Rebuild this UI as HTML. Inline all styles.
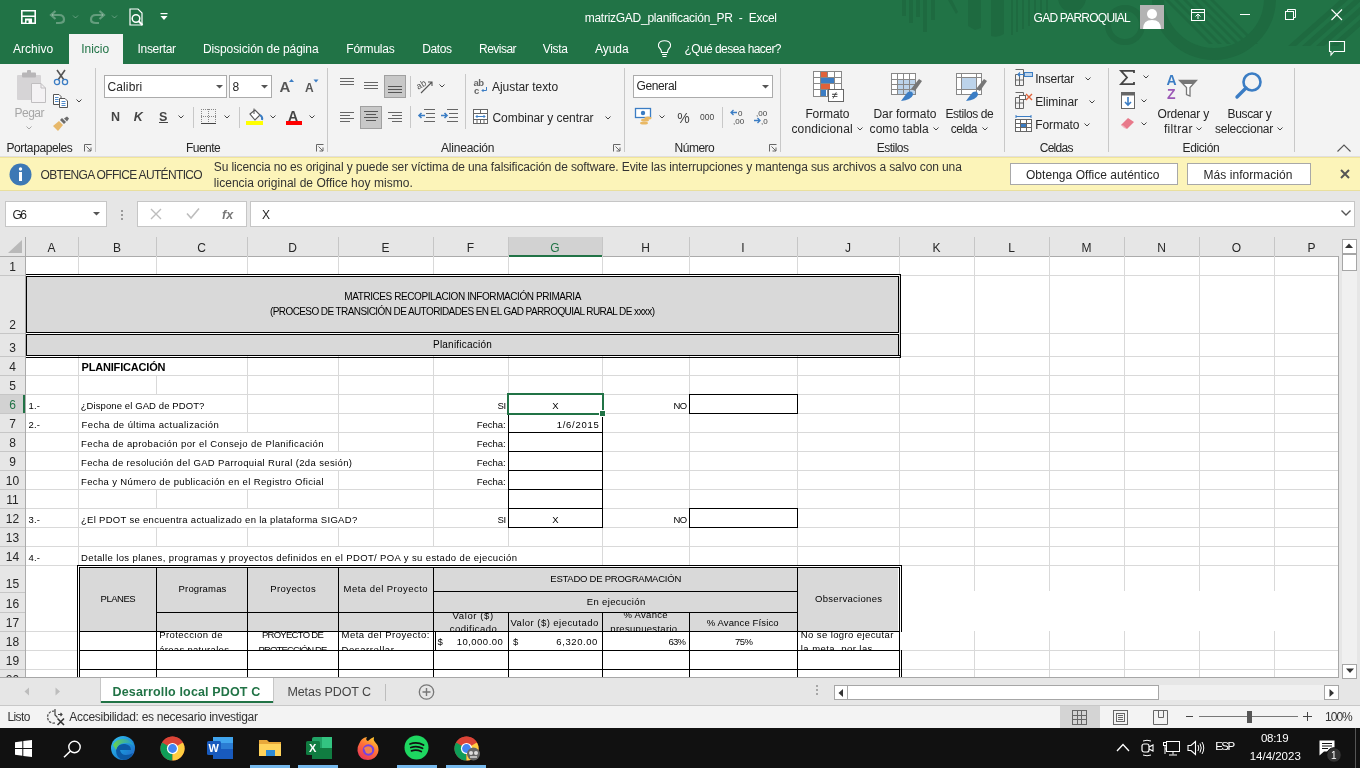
<!DOCTYPE html>
<html><head><meta charset="utf-8"><style>
html,body{margin:0;padding:0;width:1360px;height:768px;overflow:hidden;background:#fff;}
body{position:relative;font-family:"Liberation Sans",sans-serif;}
.a{position:absolute;box-sizing:border-box;}
.t{position:absolute;white-space:nowrap;line-height:1;}
svg.a{overflow:visible;}
</style></head><body>
<div id="root" style="position:absolute;left:0;top:0;width:1360px;height:768px;overflow:hidden;will-change:transform">
<div class="a" style="left:0px;top:0px;width:1360px;height:64px;background:#217346"></div>
<div class="a" style="left:0px;top:64px;width:1360px;height:93px;background:#f3f3f3"></div>
<div class="a" style="left:0px;top:156px;width:1360px;height:1px;background:#e1dfdd"></div>
<div class="a" style="left:0px;top:157px;width:1360px;height:34px;background:#fcf4b9;border-top:1px solid #f0e49a;border-bottom:1px solid #e9df9e"></div>
<div class="a" style="left:0px;top:191px;width:1360px;height:46px;background:#e6e6e6"></div>
<div class="a" style="left:0px;top:237px;width:1338px;height:441px;background:#fff"></div>
<div class="a" style="left:0px;top:678px;width:1360px;height:28px;background:#e6e6e6"></div>
<div class="a" style="left:0px;top:706px;width:1360px;height:22px;background:#f3f3f3"></div>
<div class="a" style="left:0px;top:728px;width:1360px;height:40px;background:#111111"></div>
<svg class="a" style="left:0px;top:0px;overflow:hidden" width="1360" height="64" viewBox="0 0 1360 64"><rect x="902" y="0" width="4" height="16" fill="#1e6a40"/><rect x="909" y="0" width="4" height="23" fill="#1e6a40"/><rect x="916" y="0" width="4" height="17" fill="#1e6a40"/><rect x="923" y="0" width="4" height="32" fill="#1e6a40"/><rect x="931" y="0" width="4" height="20" fill="#1e6a40"/><path d="M948 0 L952 0 L958 12 L956 14 Z" fill="#1e6a40"/><path d="M968 0 H981 V28 L975 30 L968 26 Z" fill="#1e6a40"/><path d="M991 0 H1004 V34 Q998 38 991 36 Z" fill="#1e6a40"/><rect x="1011" y="0" width="2" height="35" fill="#1e6a40"/><rect x="1016" y="0" width="2" height="32" fill="#1e6a40"/><rect x="1022" y="0" width="2" height="29" fill="#1e6a40"/><rect x="1028" y="0" width="2" height="26" fill="#1e6a40"/><rect x="1034" y="0" width="2" height="23" fill="#1e6a40"/><rect x="1040" y="0" width="2" height="20" fill="#1e6a40"/><rect x="1046" y="0" width="2" height="17" fill="#1e6a40"/><circle cx="1072" cy="-2" r="14" fill="#1e6a40"/><circle cx="1125" cy="25" r="17" fill="none" stroke="#1e6a40" stroke-width="6"/><circle cx="1214" cy="-2" r="56" fill="none" stroke="#1e6a40" stroke-width="12"/><path d="M1165 0 L1169 0 L1213 44 L1209 44 Z" fill="#1e6a40"/><path d="M1174 0 L1178 0 L1222 44 L1218 44 Z" fill="#1e6a40"/><path d="M1183 0 L1187 0 L1231 44 L1227 44 Z" fill="#1e6a40"/><path d="M1192 0 L1196 0 L1240 44 L1236 44 Z" fill="#1e6a40"/><path d="M1201 0 L1205 0 L1249 44 L1245 44 Z" fill="#1e6a40"/><path d="M1210 0 L1214 0 L1258 44 L1254 44 Z" fill="#1e6a40"/><path d="M1340 0 L1348 0 L1296 46 L1288 46 Z" fill="#1e6a40"/><path d="M1354 0 L1362 0 L1310 46 L1302 46 Z" fill="#1e6a40"/><path d="M1368 0 L1376 0 L1324 46 L1316 46 Z" fill="#1e6a40"/><path d="M1382 0 L1390 0 L1338 46 L1330 46 Z" fill="#1e6a40"/></svg>
<svg class="a" style="left:21px;top:10px;" width="16" height="14" viewBox="0 0 16 14"><path d="M0.8 0.8 H14.2 V13.2 H0.8 Z" fill="none" stroke="#fff" stroke-width="1.6"/><rect x="1" y="5.5" width="13" height="1.5" fill="#fff"/><rect x="4" y="8.5" width="7" height="4.5" fill="#fff"/><rect x="5.5" y="10.5" width="2" height="2.5" fill="#217346"/></svg>
<svg class="a" style="left:49px;top:9px;" width="32" height="16" viewBox="0 0 32 16"><path d="M3 6 H10 Q15 6 15 10.5 Q15 14 10 14 H7" fill="none" stroke="rgba(255,255,255,0.3)" stroke-width="2.2"/><path d="M6.5 2 L2 6 L6.5 10" fill="none" stroke="rgba(255,255,255,0.3)" stroke-width="2.2"/><path d="M24 6.5 L26.5 9 L29 6.5" fill="none" stroke="rgba(255,255,255,0.3)" stroke-width="1"/></svg>
<svg class="a" style="left:88px;top:9px;" width="32" height="16" viewBox="0 0 32 16"><path d="M15 6 H8 Q3 6 3 10.5 Q3 14 8 14 H11" fill="none" stroke="rgba(255,255,255,0.3)" stroke-width="2.2"/><path d="M11.5 2 L16 6 L11.5 10" fill="none" stroke="rgba(255,255,255,0.3)" stroke-width="2.2"/><path d="M24 6.5 L26.5 9 L29 6.5" fill="none" stroke="rgba(255,255,255,0.3)" stroke-width="1"/></svg>
<svg class="a" style="left:128px;top:8px;" width="18" height="18" viewBox="0 0 18 18"><path d="M2 1 H10 L14 5 V17 H2 Z" fill="none" stroke="#fff" stroke-width="1.2"/><circle cx="8" cy="10.5" r="3.8" fill="none" stroke="#fff" stroke-width="1.5"/><path d="M10.5 13 L14.5 17" stroke="#fff" stroke-width="2"/></svg>
<svg class="a" style="left:160px;top:13px;" width="9" height="8" viewBox="0 0 9 8"><rect x="0.5" y="0" width="7" height="1.2" fill="#fff"/><path d="M0.5 3 H7.5 L4 7 Z" fill="#fff"/></svg>
<div class="t" style="left:584.70px;top:12.02px;font-size:12px;color:#ffffff;letter-spacing:-0.261px;">matrizGAD_planificación_PR&nbsp;&nbsp;-&nbsp;&nbsp;Excel</div>
<div class="t" style="left:1033.60px;top:12.02px;font-size:12px;color:#ffffff;letter-spacing:-0.767px;">GAD PARROQUIAL</div>
<div class="a" style="left:1140px;top:5px;width:24px;height:24px;background:#b3b3b3"></div>
<svg class="a" style="left:1140px;top:5px;" width="24" height="24" viewBox="0 0 24 24"><circle cx="12" cy="9" r="5" fill="#fff"/><path d="M3 24 Q3 15 12 15 Q21 15 21 24 Z" fill="#fff"/></svg>
<svg class="a" style="left:1191px;top:9px;" width="16" height="13" viewBox="0 0 16 13"><rect x="0.5" y="0.5" width="13" height="11" fill="none" stroke="#fff"/><path d="M0.5 3.5 H13.5" stroke="#fff"/><path d="M7 10 V5 M4.5 7.5 L7 5 L9.5 7.5" fill="none" stroke="#fff"/></svg>
<div class="a" style="left:1240px;top:14px;width:10px;height:1px;background:#fff"></div>
<svg class="a" style="left:1285px;top:9px;" width="12" height="12" viewBox="0 0 12 12"><rect x="0.5" y="2.5" width="8" height="8" fill="none" stroke="#fff"/><path d="M2.5 2.5 V0.5 H10.5 V8.5 H8.5" fill="none" stroke="#fff"/></svg>
<svg class="a" style="left:1331px;top:9px;" width="12" height="12" viewBox="0 0 12 12"><path d="M0.5 0.5 L11 11 M11 0.5 L0.5 11" stroke="#fff" stroke-width="1.1"/></svg>
<svg class="a" style="left:1328px;top:40px;" width="18" height="17" viewBox="0 0 18 17"><path d="M1.5 1.5 H16.5 V11.5 H6 L3 15 V11.5 H1.5 Z" fill="none" stroke="#fff" stroke-width="1.1"/></svg>
<div class="a" style="left:69px;top:34px;width:54px;height:30px;background:#f3f3f3"></div>
<div class="t" style="left:12.90px;top:43.02px;font-size:12px;color:#ffffff;letter-spacing:0.041px;">Archivo</div>
<div class="t" style="left:137.50px;top:43.02px;font-size:12px;color:#ffffff;letter-spacing:-0.310px;">Insertar</div>
<div class="t" style="left:202.90px;top:43.02px;font-size:12px;color:#ffffff;letter-spacing:-0.086px;">Disposición de página</div>
<div class="t" style="left:346.30px;top:43.02px;font-size:12px;color:#ffffff;letter-spacing:-0.226px;">Fórmulas</div>
<div class="t" style="left:422.30px;top:43.02px;font-size:12px;color:#ffffff;letter-spacing:-0.430px;">Datos</div>
<div class="t" style="left:479.00px;top:43.02px;font-size:12px;color:#ffffff;letter-spacing:-0.525px;">Revisar</div>
<div class="t" style="left:542.70px;top:43.02px;font-size:12px;color:#ffffff;letter-spacing:-0.292px;">Vista</div>
<div class="t" style="left:595.00px;top:43.02px;font-size:12px;color:#ffffff;letter-spacing:-0.062px;">Ayuda</div>
<div class="t" style="left:684.40px;top:43.02px;font-size:12px;color:#ffffff;letter-spacing:-0.557px;">¿Qué desea hacer?</div>
<div class="t" style="left:81.30px;top:43.02px;font-size:12px;color:#217346;letter-spacing:-0.036px;">Inicio</div>
<svg class="a" style="left:657px;top:40px;" width="15" height="18" viewBox="0 0 15 18"><path d="M4.5 12.5 Q4.5 10 3 8.5 Q1 6.5 1.5 4.5 Q2.5 0.8 7.5 0.8 Q12.5 0.8 13.5 4.5 Q14 6.5 12 8.5 Q10.5 10 10.5 12.5 Z" fill="none" stroke="#fff" stroke-width="1.1"/><path d="M5 14.5 H10 M5.5 16.5 H9.5" stroke="#fff" stroke-width="1.1"/></svg>
<div class="a" style="left:95px;top:68px;width:1px;height:84px;background:#c8c8c8"></div>
<div class="a" style="left:327px;top:68px;width:1px;height:84px;background:#c8c8c8"></div>
<div class="a" style="left:624px;top:68px;width:1px;height:84px;background:#c8c8c8"></div>
<div class="a" style="left:780px;top:68px;width:1px;height:84px;background:#c8c8c8"></div>
<div class="a" style="left:1004px;top:68px;width:1px;height:84px;background:#c8c8c8"></div>
<div class="a" style="left:1108px;top:68px;width:1px;height:84px;background:#c8c8c8"></div>
<div class="a" style="left:1294px;top:68px;width:1px;height:84px;background:#c8c8c8"></div>
<div class="t" style="left:6.50px;top:142.02px;font-size:12px;color:#262626;letter-spacing:-0.410px;">Portapapeles</div>
<div class="t" style="left:185.90px;top:142.02px;font-size:12px;color:#262626;letter-spacing:-0.493px;">Fuente</div>
<div class="t" style="left:441.00px;top:142.02px;font-size:12px;color:#262626;letter-spacing:-0.207px;">Alineación</div>
<div class="t" style="left:674.50px;top:142.02px;font-size:12px;color:#262626;letter-spacing:-0.480px;">Número</div>
<div class="t" style="left:876.70px;top:142.02px;font-size:12px;color:#262626;letter-spacing:-0.506px;">Estilos</div>
<div class="t" style="left:1039.70px;top:142.02px;font-size:12px;color:#262626;letter-spacing:-0.709px;">Celdas</div>
<div class="t" style="left:1182.60px;top:142.02px;font-size:12px;color:#262626;letter-spacing:-0.394px;">Edición</div>
<svg class="a" style="left:84px;top:144px;" width="8" height="8" viewBox="0 0 8 8"><path d="M0.5 7.5 V0.5 H7.5" fill="none" stroke="#666" stroke-width="1"/><path d="M2.5 2.5 L7 7 M3.5 7 H7 V3.5" fill="none" stroke="#666" stroke-width="1"/></svg>
<svg class="a" style="left:316px;top:144px;" width="8" height="8" viewBox="0 0 8 8"><path d="M0.5 7.5 V0.5 H7.5" fill="none" stroke="#666" stroke-width="1"/><path d="M2.5 2.5 L7 7 M3.5 7 H7 V3.5" fill="none" stroke="#666" stroke-width="1"/></svg>
<svg class="a" style="left:613px;top:144px;" width="8" height="8" viewBox="0 0 8 8"><path d="M0.5 7.5 V0.5 H7.5" fill="none" stroke="#666" stroke-width="1"/><path d="M2.5 2.5 L7 7 M3.5 7 H7 V3.5" fill="none" stroke="#666" stroke-width="1"/></svg>
<svg class="a" style="left:769px;top:144px;" width="8" height="8" viewBox="0 0 8 8"><path d="M0.5 7.5 V0.5 H7.5" fill="none" stroke="#666" stroke-width="1"/><path d="M2.5 2.5 L7 7 M3.5 7 H7 V3.5" fill="none" stroke="#666" stroke-width="1"/></svg>
<svg class="a" style="left:1337px;top:144px;" width="15" height="8" viewBox="0 0 15 8"><path d="M0.5 7.5 L7 1 L13.5 7.5" fill="none" stroke="#555" stroke-width="1.1"/></svg>
<svg class="a" style="left:16px;top:70px;" width="32" height="34" viewBox="0 0 32 34"><rect x="1" y="5" width="24" height="25" rx="1" fill="#d6d4d6"/><rect x="6" y="2.5" width="14" height="5" rx="1" fill="#b8b6b8"/><rect x="11" y="0" width="4" height="4" rx="1" fill="#b8b6b8"/><path d="M15.5 13.5 H25 L29.5 18 V32.5 H15.5 Z" fill="#f4f2f4" stroke="#c0bec0" stroke-width="1"/><path d="M25 13.5 V18 H29.5" fill="none" stroke="#c0bec0"/></svg>
<div class="t" style="left:14.60px;top:107.02px;font-size:12px;color:#a6a6a6;letter-spacing:-0.524px;">Pegar</div>
<svg class="a" style="left:26px;top:126px;" width="6" height="4" viewBox="0 0 6 4"><path d="M0.5 0.5 L3 3 L5.5 0.5" fill="none" stroke="#a6a6a6" stroke-width="1"/></svg>
<svg class="a" style="left:53px;top:69px;" width="16" height="17" viewBox="0 0 16 17"><path d="M4 1 L11 11 M12 1 L5 11" stroke="#555" stroke-width="1.6"/><circle cx="4" cy="13" r="2.6" fill="none" stroke="#3b7dc4" stroke-width="1.3"/><circle cx="12" cy="13" r="2.6" fill="none" stroke="#3b7dc4" stroke-width="1.3"/></svg>
<svg class="a" style="left:52px;top:93px;" width="17" height="16" viewBox="0 0 17 16"><path d="M1.5 1.5 H7 L9 3.5 V11.5 H1.5 Z" fill="#fff" stroke="#555"/><path d="M7.5 5.5 H13 L15.5 8 V14.5 H7.5 Z" fill="#fff" stroke="#555"/><path d="M3 4.5 H6.5 M3 6.5 H6.5 M3 8.5 H6.5 M9.5 8.5 H13.5 M9.5 10.5 H13.5 M9.5 12.5 H13.5" stroke="#3b7dc4" stroke-width="0.9"/></svg>
<svg class="a" style="left:76px;top:99px;" width="6" height="4" viewBox="0 0 6 4"><path d="M0.5 0.5 L3 3 L5.5 0.5" fill="none" stroke="#444" stroke-width="1"/></svg>
<svg class="a" style="left:52px;top:116px;" width="18" height="16" viewBox="0 0 18 16"><path d="M1 10 L7 5 L11 9 L6 15 Z" fill="#e7b86a"/><path d="M8 4 L12 8 L14 6 L10 2 Z" fill="#6b6b6b"/><path d="M12 2.5 L15 0.5 L17 2.5 L15 5.5 Z" fill="#6b6b6b"/></svg>
<div class="a" style="left:104px;top:75px;width:123px;height:23px;background:#fff;border:1px solid #ababab"></div>
<div class="t" style="left:107.40px;top:81.02px;font-size:12px;color:#262626;letter-spacing:0.142px;">Calibri</div>
<svg class="a" style="left:215.9px;top:84.5px;" width="7" height="4" viewBox="0 0 7 4"><path d="M0 0 H7 L3.5 3.5 Z" fill="#555"/></svg>
<div class="a" style="left:229px;top:75px;width:43px;height:23px;background:#fff;border:1px solid #ababab"></div>
<div class="t" style="left:232.60px;top:81.02px;font-size:12px;color:#262626;">8</div>
<svg class="a" style="left:260.9px;top:84.5px;" width="7" height="4" viewBox="0 0 7 4"><path d="M0 0 H7 L3.5 3.5 Z" fill="#555"/></svg>
<svg class="a" style="left:279px;top:78px;" width="16" height="16" viewBox="0 0 16 16"><text x="0.5" y="14" font-family="Liberation Sans" font-size="15" font-weight="bold" fill="#555">A</text><path d="M10 4 L12.5 1 L15 4 Z" fill="#3b7dc4"/></svg>
<svg class="a" style="left:304px;top:79px;" width="16" height="15" viewBox="0 0 16 15"><text x="1" y="13" font-family="Liberation Sans" font-size="12" font-weight="bold" fill="#555">A</text><path d="M9.5 0.5 H14.5 L12 3.5 Z" fill="#3b7dc4"/></svg>
<div class="t" style="left:110.90px;top:110.77px;font-size:12.5px;color:#444;font-weight:bold;">N</div>
<div class="t" style="left:133.80px;top:110.77px;font-size:12.5px;color:#444;font-weight:bold;font-style:italic;">K</div>
<div class="t" style="left:158.90px;top:110.77px;font-size:12.5px;color:#444;font-weight:bold;">S</div>
<div class="a" style="left:158.5px;top:122px;width:9px;height:1px;background:#444"></div>
<svg class="a" style="left:178px;top:115px;" width="6" height="4" viewBox="0 0 6 4"><path d="M0.5 0.5 L3 3 L5.5 0.5" fill="none" stroke="#444" stroke-width="1"/></svg>
<div class="a" style="left:193px;top:107px;width:1px;height:21px;background:#c8c8c8"></div>
<svg class="a" style="left:201px;top:109px;" width="15" height="15" viewBox="0 0 15 15"><path d="M0.5 0 V14 M14.5 0 V14 M7.5 0 V14 M0 0.5 H15 M0 7.5 H15" fill="none" stroke="#888" stroke-width="1" stroke-dasharray="1 1"/><path d="M0 14.5 H15" stroke="#444" stroke-width="1"/></svg>
<svg class="a" style="left:224px;top:115px;" width="6" height="4" viewBox="0 0 6 4"><path d="M0.5 0.5 L3 3 L5.5 0.5" fill="none" stroke="#444" stroke-width="1"/></svg>
<div class="a" style="left:239px;top:107px;width:1px;height:21px;background:#c8c8c8"></div>
<svg class="a" style="left:246px;top:108px;" width="18" height="18" viewBox="0 0 18 18"><path d="M4 6 L9 2 L14 7 L9 12 Z" fill="#fff" stroke="#555" stroke-width="1.1"/><path d="M8 0.5 V6" stroke="#555"/><path d="M14 7 Q17 9 16 12" fill="none" stroke="#3b7dc4" stroke-width="2"/><rect x="0" y="13" width="17" height="4" fill="#ffff00"/></svg>
<svg class="a" style="left:270px;top:115px;" width="6" height="4" viewBox="0 0 6 4"><path d="M0.5 0.5 L3 3 L5.5 0.5" fill="none" stroke="#444" stroke-width="1"/></svg>
<svg class="a" style="left:286px;top:109px;" width="17" height="17" viewBox="0 0 17 17"><text x="2" y="11.5" font-family="Liberation Sans" font-size="14" font-weight="bold" fill="#444">A</text><rect x="0" y="12" width="16" height="4" fill="#ff0000"/></svg>
<svg class="a" style="left:309px;top:115px;" width="6" height="4" viewBox="0 0 6 4"><path d="M0.5 0.5 L3 3 L5.5 0.5" fill="none" stroke="#444" stroke-width="1"/></svg>
<svg class="a" style="left:340px;top:78px;" width="14" height="9" viewBox="0 0 14 9"><path d="M0 0.5 H14" stroke="#666" stroke-width="1"/><path d="M0 3.5 H14" stroke="#666" stroke-width="1"/><path d="M0 6.5 H14" stroke="#666" stroke-width="1"/></svg>
<svg class="a" style="left:364px;top:82px;" width="14" height="9" viewBox="0 0 14 9"><path d="M0 0.5 H14" stroke="#666" stroke-width="1"/><path d="M0 3.5 H14" stroke="#666" stroke-width="1"/><path d="M0 6.5 H14" stroke="#666" stroke-width="1"/></svg>
<div class="a" style="left:384px;top:75px;width:22px;height:23px;background:#c8c8c8;border:1px solid #a0a0a0"></div>
<svg class="a" style="left:388px;top:86px;" width="14" height="9" viewBox="0 0 14 9"><path d="M0 0.5 H14" stroke="#555" stroke-width="1"/><path d="M0 3.5 H14" stroke="#555" stroke-width="1"/><path d="M0 6.5 H14" stroke="#555" stroke-width="1"/></svg>
<div class="a" style="left:410px;top:76px;width:1px;height:21px;background:#c8c8c8"></div>
<svg class="a" style="left:417px;top:78px;" width="18" height="16" viewBox="0 0 18 16"><text x="0" y="9" font-family="Liberation Sans" font-size="9" fill="#555" transform="rotate(-30 6 8)">ab</text><path d="M4 15 L15 4 M11 4 H15 V8" fill="none" stroke="#555" stroke-width="1.1"/></svg>
<svg class="a" style="left:439px;top:84px;" width="6" height="4" viewBox="0 0 6 4"><path d="M0.5 0.5 L3 3 L5.5 0.5" fill="none" stroke="#444" stroke-width="1"/></svg>
<div class="a" style="left:465px;top:74px;width:1px;height:55px;background:#c8c8c8"></div>
<svg class="a" style="left:474px;top:78px;" width="14" height="16" viewBox="0 0 14 16"><text x="-0.5" y="7.5" font-family="Liberation Sans" font-size="9.5" font-weight="bold" fill="#666" letter-spacing="-0.5">ab</text><text x="0" y="15.5" font-family="Liberation Sans" font-size="9.5" font-weight="bold" fill="#666">c</text><path d="M12.5 9 V12.5 H8 M9.5 11 L8 12.5 L9.5 14" fill="none" stroke="#3b7dc4" stroke-width="1"/></svg>
<div class="t" style="left:492.00px;top:81.02px;font-size:12px;color:#262626;letter-spacing:-0.054px;">Ajustar texto</div>
<svg class="a" style="left:340px;top:112px;" width="14" height="12" viewBox="0 0 14 12"><path d="M0 0.5 H14" stroke="#666" stroke-width="1"/><path d="M0 3.5 H10" stroke="#666" stroke-width="1"/><path d="M0 6.5 H14" stroke="#666" stroke-width="1"/><path d="M0 9.5 H10" stroke="#666" stroke-width="1"/></svg>
<div class="a" style="left:360px;top:106px;width:22px;height:23px;background:#c8c8c8;border:1px solid #a0a0a0"></div>
<svg class="a" style="left:364px;top:111px;" width="14" height="12" viewBox="0 0 14 12"><path d="M0 0.5 H14 M2 3.5 H12 M0 6.5 H14 M2 9.5 H12" stroke="#555"/></svg>
<svg class="a" style="left:388px;top:112px;" width="14" height="12" viewBox="0 0 14 12"><path d="M0 0.5 H14 M4 3.5 H14 M0 6.5 H14 M4 9.5 H14" stroke="#666"/></svg>
<div class="a" style="left:410px;top:106px;width:1px;height:22px;background:#c8c8c8"></div>
<svg class="a" style="left:418px;top:109px;" width="17" height="15" viewBox="0 0 17 15"><path d="M6 0.5 H17 M8 4.5 H17 M8 8.5 H17 M6 12.5 H17" stroke="#666"/><path d="M7 6.5 H1 M3.5 4 L1 6.5 L3.5 9" fill="none" stroke="#3b7dc4" stroke-width="1.6"/></svg>
<svg class="a" style="left:441px;top:109px;" width="17" height="15" viewBox="0 0 17 15"><path d="M6 0.5 H17 M8 4.5 H17 M8 8.5 H17 M6 12.5 H17" stroke="#666"/><path d="M0 6.5 H6 M3.5 4 L6 6.5 L3.5 9" fill="none" stroke="#3b7dc4" stroke-width="1.6"/></svg>
<svg class="a" style="left:473px;top:109px;" width="15" height="15" viewBox="0 0 15 15"><rect x="0.5" y="0.5" width="14" height="14" fill="#fff" stroke="#666"/><path d="M0.5 4.5 H14.5 M0.5 10.5 H14.5 M7.5 0.5 V4.5 M7.5 10.5 V14.5 M4 10.5 V14.5 M11 10.5 V14.5" stroke="#666"/><path d="M3 7.5 H12 M4.5 6 L3 7.5 L4.5 9 M10.5 6 L12 7.5 L10.5 9" fill="none" stroke="#3b7dc4"/></svg>
<div class="t" style="left:492.50px;top:112.02px;font-size:12px;color:#262626;letter-spacing:-0.058px;">Combinar y centrar</div>
<svg class="a" style="left:605px;top:116px;" width="6" height="4" viewBox="0 0 6 4"><path d="M0.5 0.5 L3 3 L5.5 0.5" fill="none" stroke="#444" stroke-width="1"/></svg>
<div class="a" style="left:633px;top:75px;width:140px;height:23px;background:#fff;border:1px solid #ababab"></div>
<div class="t" style="left:636.50px;top:80.02px;font-size:12px;color:#262626;letter-spacing:-0.385px;">General</div>
<svg class="a" style="left:761.8px;top:84.5px;" width="7" height="4" viewBox="0 0 7 4"><path d="M0 0 H7 L3.5 3.5 Z" fill="#555"/></svg>
<svg class="a" style="left:635px;top:108px;" width="18" height="18" viewBox="0 0 18 18"><rect x="0.5" y="0.5" width="15" height="9" fill="#fff" stroke="#3b7dc4" stroke-width="1.3"/><circle cx="8" cy="5" r="2.2" fill="#3b7dc4"/><ellipse cx="10" cy="12" rx="4" ry="1.6" fill="#e9b864"/><ellipse cx="13" cy="10" rx="3.5" ry="1.5" fill="#e9b864"/><ellipse cx="9" cy="15" rx="4" ry="1.6" fill="#e9b864"/></svg>
<svg class="a" style="left:659px;top:115px;" width="6" height="4" viewBox="0 0 6 4"><path d="M0.5 0.5 L3 3 L5.5 0.5" fill="none" stroke="#444" stroke-width="1"/></svg>
<div class="t" style="left:677.30px;top:111.02px;font-size:14px;color:#444;">%</div>
<div class="t" style="left:699.90px;top:112.77px;font-size:8.5px;color:#444;letter-spacing:0.073px;">000</div>
<div class="a" style="left:722px;top:107px;width:1px;height:21px;background:#c8c8c8"></div>
<svg class="a" style="left:730px;top:109px;" width="15" height="16" viewBox="0 0 15 16"><path d="M7 3.5 H1 M3.5 1 L1 3.5 L3.5 6" fill="none" stroke="#3b7dc4" stroke-width="1.3"/><text x="8" y="7" font-family="Liberation Sans" font-size="8" fill="#444">0</text><text x="3" y="15" font-family="Liberation Sans" font-size="8" fill="#444">,00</text></svg>
<svg class="a" style="left:753px;top:109px;" width="16" height="16" viewBox="0 0 16 16"><text x="3" y="7" font-family="Liberation Sans" font-size="8" fill="#444">,00</text><path d="M1 11.5 H7 M4.5 9 L7 11.5 L4.5 14" fill="none" stroke="#3b7dc4" stroke-width="1.3"/><text x="8" y="15" font-family="Liberation Sans" font-size="8" fill="#444">,0</text></svg>
<svg class="a" style="left:813px;top:71px;" width="32" height="31" viewBox="0 0 32 31"><g fill="#fff" stroke="#888" stroke-width="1"><rect x="0.5" y="0.5" width="28" height="25"/></g><path d="M7.5 0.5 V25.5 M14.5 0.5 V25.5 M21.5 0.5 V25.5 M0.5 6.5 H28.5 M0.5 12.5 H28.5 M0.5 18.5 H28.5" stroke="#888"/><rect x="8" y="1" width="6" height="5" fill="#e0623a"/><rect x="8" y="7" width="13" height="5" fill="#3b7dc4"/><rect x="8" y="13" width="9" height="5" fill="#e0623a"/><rect x="8" y="19" width="5" height="6" fill="#3b7dc4"/><rect x="15.5" y="18.5" width="15" height="12" fill="#fff" stroke="#666"/><text x="18.5" y="28" font-family="Liberation Sans" font-size="11" fill="#333">≠</text></svg>
<div class="t" style="left:805.40px;top:108.02px;font-size:12px;color:#262626;letter-spacing:-0.111px;">Formato</div>
<div class="t" style="left:791.50px;top:123.02px;font-size:12px;color:#262626;letter-spacing:0.105px;">condicional</div>
<svg class="a" style="left:857px;top:127px;" width="6" height="4" viewBox="0 0 6 4"><path d="M0.5 0.5 L3 3 L5.5 0.5" fill="none" stroke="#444" stroke-width="1"/></svg>
<svg class="a" style="left:891px;top:73px;" width="31" height="29" viewBox="0 0 31 29"><rect x="0.5" y="0.5" width="24" height="21" fill="#fff" stroke="#888"/><rect x="7" y="7" width="17" height="14" fill="#bcd3ea"/><path d="M6.5 0.5 V21.5 M12.5 0.5 V21.5 M18.5 0.5 V21.5 M0.5 6.5 H24.5 M0.5 11.5 H24.5 M0.5 16.5 H24.5" stroke="#888"/><path d="M20 16 L28 6 L31 8 L24 18 Z" fill="#777"/><path d="M17 19 Q22 17 22 22 Q20 27 10 28 Q15 21 17 19 Z" fill="#3b7dc4"/></svg>
<div class="t" style="left:873.40px;top:108.02px;font-size:12px;color:#262626;letter-spacing:-0.032px;">Dar formato</div>
<div class="t" style="left:869.60px;top:123.02px;font-size:12px;color:#262626;letter-spacing:0.050px;">como tabla</div>
<svg class="a" style="left:933.4px;top:127px;" width="6" height="4" viewBox="0 0 6 4"><path d="M0.5 0.5 L3 3 L5.5 0.5" fill="none" stroke="#444" stroke-width="1"/></svg>
<svg class="a" style="left:956px;top:73px;" width="31" height="29" viewBox="0 0 31 29"><rect x="0.5" y="0.5" width="25" height="21" fill="#fff" stroke="#888"/><rect x="6" y="5" width="15" height="11" fill="#bcd3ea"/><path d="M5.5 0.5 V21.5 M20.5 0.5 V21.5 M0.5 4.5 H25.5 M0.5 16.5 H25.5" stroke="#888"/><path d="M20 16 L28 6 L31 8 L24 18 Z" fill="#777"/><path d="M17 19 Q22 17 22 22 Q20 27 10 28 Q15 21 17 19 Z" fill="#3b7dc4"/></svg>
<div class="t" style="left:945.40px;top:108.02px;font-size:12px;color:#262626;letter-spacing:-0.403px;">Estilos de</div>
<div class="t" style="left:950.80px;top:123.02px;font-size:12px;color:#262626;letter-spacing:-0.498px;">celda</div>
<svg class="a" style="left:982px;top:127px;" width="6" height="4" viewBox="0 0 6 4"><path d="M0.5 0.5 L3 3 L5.5 0.5" fill="none" stroke="#444" stroke-width="1"/></svg>
<svg class="a" style="left:1015px;top:69px;" width="18" height="17" viewBox="0 0 18 17"><path d="M0.5 5.5 H8.5 V16.5 H0.5 Z M0.5 11 H8.5 M4.5 5.5 V16.5 M0.5 0.5 H8.5 V5.5" fill="none" stroke="#666"/><rect x="9.5" y="3.5" width="8" height="4" fill="#bcd3ea" stroke="#3b7dc4"/><path d="M9 5.5 H3 M5 3.5 L3 5.5 L5 7.5" fill="none" stroke="#3b7dc4" stroke-width="1.2"/></svg>
<div class="t" style="left:1035.20px;top:73.02px;font-size:12px;color:#262626;letter-spacing:-0.235px;">Insertar</div>
<svg class="a" style="left:1085px;top:77px;" width="6" height="4" viewBox="0 0 6 4"><path d="M0.5 0.5 L3 3 L5.5 0.5" fill="none" stroke="#444" stroke-width="1"/></svg>
<svg class="a" style="left:1015px;top:92px;" width="18" height="17" viewBox="0 0 18 17"><path d="M0.5 5.5 H8.5 V16.5 H0.5 Z M0.5 11 H8.5 M4.5 5.5 V16.5 M0.5 0.5 H8.5 V5.5" fill="none" stroke="#666"/><rect x="4.5" y="3.5" width="6" height="4" fill="#fff" stroke="#666"/><path d="M11 2 L17 8 M17 2 L11 8" stroke="#e0623a" stroke-width="1.4"/></svg>
<div class="t" style="left:1035.20px;top:96.02px;font-size:12px;color:#262626;letter-spacing:-0.068px;">Eliminar</div>
<svg class="a" style="left:1089px;top:100px;" width="6" height="4" viewBox="0 0 6 4"><path d="M0.5 0.5 L3 3 L5.5 0.5" fill="none" stroke="#444" stroke-width="1"/></svg>
<svg class="a" style="left:1015px;top:115px;" width="18" height="17" viewBox="0 0 18 17"><rect x="0.5" y="4.5" width="16" height="12" fill="#fff" stroke="#666"/><path d="M0.5 8.5 H16.5 M0.5 12.5 H16.5 M5.5 4.5 V16.5 M11.5 4.5 V16.5" stroke="#666"/><rect x="6" y="9" width="5" height="3" fill="#3b7dc4"/><path d="M1 1.5 H16 M1 0 V3 M16 0 V3" stroke="#3b7dc4"/></svg>
<div class="t" style="left:1035.20px;top:119.02px;font-size:12px;color:#262626;letter-spacing:-0.068px;">Formato</div>
<svg class="a" style="left:1084px;top:123px;" width="6" height="4" viewBox="0 0 6 4"><path d="M0.5 0.5 L3 3 L5.5 0.5" fill="none" stroke="#444" stroke-width="1"/></svg>
<svg class="a" style="left:1120px;top:70px;" width="15" height="15" viewBox="0 0 15 15"><path d="M14 3 V0.8 H1 L7 7.5 L1 14.2 H14 V12" fill="none" stroke="#444" stroke-width="1.8"/></svg>
<svg class="a" style="left:1143px;top:75px;" width="6" height="4" viewBox="0 0 6 4"><path d="M0.5 0.5 L3 3 L5.5 0.5" fill="none" stroke="#444" stroke-width="1"/></svg>
<svg class="a" style="left:1121px;top:92px;" width="14" height="17" viewBox="0 0 14 17"><rect x="0.5" y="0.5" width="13" height="16" fill="#fff" stroke="#666"/><rect x="0.5" y="0.5" width="13" height="3" fill="#666"/><path d="M7 5 V13 M4 10 L7 13 L10 10" fill="none" stroke="#3b7dc4" stroke-width="1.6"/></svg>
<svg class="a" style="left:1141px;top:99px;" width="6" height="4" viewBox="0 0 6 4"><path d="M0.5 0.5 L3 3 L5.5 0.5" fill="none" stroke="#444" stroke-width="1"/></svg>
<svg class="a" style="left:1120px;top:116px;" width="15" height="14" viewBox="0 0 15 14"><path d="M1 9 L8 2 L14 6 L7 13 Z" fill="#e8798a"/><path d="M1 9 L4 12 L7 13 L3.5 9.5 Z" fill="#f2b4bd"/></svg>
<svg class="a" style="left:1141px;top:122px;" width="6" height="4" viewBox="0 0 6 4"><path d="M0.5 0.5 L3 3 L5.5 0.5" fill="none" stroke="#444" stroke-width="1"/></svg>
<svg class="a" style="left:1167px;top:72px;" width="31" height="28" viewBox="0 0 31 28"><text x="-0.5" y="12.5" font-family="Liberation Sans" font-weight="bold" font-size="14" fill="#3b7dc4">A</text><text x="0" y="27" font-family="Liberation Sans" font-weight="bold" font-size="14" fill="#9b59b6">Z</text><path d="M12.5 8.5 H29.5 L23 15.5 V24 L19.5 22.5 V15.5 Z" fill="#fff" stroke="#777" stroke-width="1.3"/><path d="M13 9 H29 L26 12 H16 Z" fill="#777"/></svg>
<div class="t" style="left:1157.50px;top:108.02px;font-size:12px;color:#262626;letter-spacing:-0.206px;">Ordenar y</div>
<div class="t" style="left:1164.00px;top:123.02px;font-size:12px;color:#262626;letter-spacing:0.290px;">filtrar</div>
<svg class="a" style="left:1196px;top:127px;" width="6" height="4" viewBox="0 0 6 4"><path d="M0.5 0.5 L3 3 L5.5 0.5" fill="none" stroke="#444" stroke-width="1"/></svg>
<svg class="a" style="left:1234px;top:71px;" width="30" height="29" viewBox="0 0 30 29"><circle cx="18" cy="11" r="8.5" fill="none" stroke="#3b7dc4" stroke-width="2.6"/><path d="M12 17 L3 26" stroke="#3b7dc4" stroke-width="3.4" stroke-linecap="round"/></svg>
<div class="t" style="left:1227.60px;top:108.02px;font-size:12px;color:#262626;letter-spacing:-0.373px;">Buscar y</div>
<div class="t" style="left:1215.00px;top:123.02px;font-size:12px;color:#262626;letter-spacing:-0.245px;">seleccionar</div>
<svg class="a" style="left:1277px;top:127px;" width="6" height="4" viewBox="0 0 6 4"><path d="M0.5 0.5 L3 3 L5.5 0.5" fill="none" stroke="#444" stroke-width="1"/></svg>
<svg class="a" style="left:9px;top:163px;" width="23" height="23" viewBox="0 0 23 23"><circle cx="11.5" cy="11.5" r="11" fill="#3d78b5"/><rect x="10" y="9" width="3" height="9" fill="#fff"/><circle cx="11.5" cy="6" r="1.7" fill="#fff"/></svg>
<div class="t" style="left:40.50px;top:169.02px;font-size:12px;color:#333;letter-spacing:-0.661px;">OBTENGA OFFICE AUTÉNTICO</div>
<div class="t" style="left:213.75px;top:161.02px;font-size:12px;color:#333;letter-spacing:-0.118px;">Su licencia no es original y puede ser víctima de una falsificación de software. Evite las interrupciones y mantenga sus archivos a salvo con una</div>
<div class="t" style="left:213.75px;top:177.02px;font-size:12px;color:#333;letter-spacing:0.030px;">licencia original de Office hoy mismo.</div>
<div class="a" style="left:1010px;top:163px;width:168px;height:22px;background:#fff;border:1px solid #a8a8a8"></div>
<div class="t" style="left:1026.00px;top:169.02px;font-size:12px;color:#262626;letter-spacing:0.036px;">Obtenga Office auténtico</div>
<div class="a" style="left:1187px;top:163px;width:124px;height:22px;background:#fff;border:1px solid #a8a8a8"></div>
<div class="t" style="left:1203.50px;top:169.02px;font-size:12px;color:#262626;letter-spacing:0.058px;">Más información</div>
<svg class="a" style="left:1340px;top:169px;" width="10" height="10" viewBox="0 0 10 10"><path d="M1 1 L9 9 M9 1 L1 9" stroke="#555" stroke-width="2"/></svg>
<div class="a" style="left:5px;top:201px;width:102px;height:26px;background:#fff;border:1px solid #c6c6c6"></div>
<div class="t" style="left:12.50px;top:209.02px;font-size:12px;color:#262626;letter-spacing:-1.504px;">G6</div>
<svg class="a" style="left:92.5px;top:211.5px;" width="7" height="4" viewBox="0 0 7 4"><path d="M0 0 H7 L3.5 3.5 Z" fill="#555"/></svg>
<div class="a" style="left:121px;top:210px;width:2px;height:2px;background:#9a9a9a"></div>
<div class="a" style="left:121px;top:214px;width:2px;height:2px;background:#9a9a9a"></div>
<div class="a" style="left:121px;top:218px;width:2px;height:2px;background:#9a9a9a"></div>
<div class="a" style="left:137px;top:201px;width:110px;height:26px;background:#fff;border:1px solid #c6c6c6"></div>
<svg class="a" style="left:150px;top:208px;" width="12" height="12" viewBox="0 0 12 12"><path d="M1 1 L11 11 M11 1 L1 11" stroke="#bdbdbd" stroke-width="1.4"/></svg>
<svg class="a" style="left:186px;top:207px;" width="14" height="13" viewBox="0 0 14 13"><path d="M1 6.5 L5 11 L13 1.5" fill="none" stroke="#bdbdbd" stroke-width="1.6"/></svg>
<div class="t" style="left:222.00px;top:208.77px;font-size:12.5px;color:#777;font-weight:bold;font-family:"Liberation Serif",serif;"><i>fx</i></div>
<div class="a" style="left:250px;top:201px;width:1105px;height:26px;background:#fff;border:1px solid #c6c6c6"></div>
<div class="t" style="left:262.00px;top:209.02px;font-size:12px;color:#262626;">X</div>
<svg class="a" style="left:1341px;top:210px;" width="10" height="6" viewBox="0 0 10 6"><path d="M0.5 0.5 L5 5 L9.5 0.5" fill="none" stroke="#555" stroke-width="1.4"/></svg>
<div class="a" style="left:0;top:0;width:1338px;height:678px;overflow:hidden">
<div class="a" style="left:0px;top:237px;width:1338px;height:19px;background:#e6e6e6"></div>
<div class="a" style="left:0px;top:256px;width:1338px;height:1px;background:#ababab"></div>
<div class="a" style="left:509px;top:237px;width:93px;height:19px;background:#d2d2d2"></div>
<div class="a" style="left:508px;top:255px;width:95px;height:2px;background:#217346"></div>
<div class="a" style="left:0px;top:257px;width:25px;height:421px;background:#e6e6e6"></div>
<div class="a" style="left:25px;top:237px;width:1px;height:441px;background:#ababab"></div>
<div class="a" style="left:0px;top:395px;width:25px;height:18px;background:#d2d2d2"></div>
<div class="a" style="left:23px;top:394px;width:2px;height:20px;background:#217346"></div>
<svg class="a" style="left:0px;top:237px;" width="25" height="19" viewBox="0 0 25 19"><path d="M8 16 L22 16 L22 3 Z" fill="#b9b9b9"/></svg>
<svg class="a" style="left:0px;top:0px;shape-rendering:crispEdges;pointer-events:none" width="1360" height="768" viewBox="0 0 1360 768"><path d="M78.5 237 V256" stroke="#c6c6c6" stroke-width="1" fill="none"/><path d="M156.5 237 V256" stroke="#c6c6c6" stroke-width="1" fill="none"/><path d="M247.5 237 V256" stroke="#c6c6c6" stroke-width="1" fill="none"/><path d="M338.5 237 V256" stroke="#c6c6c6" stroke-width="1" fill="none"/><path d="M433.5 237 V256" stroke="#c6c6c6" stroke-width="1" fill="none"/><path d="M508.5 237 V256" stroke="#c6c6c6" stroke-width="1" fill="none"/><path d="M602.5 237 V256" stroke="#c6c6c6" stroke-width="1" fill="none"/><path d="M689.5 237 V256" stroke="#c6c6c6" stroke-width="1" fill="none"/><path d="M797.5 237 V256" stroke="#c6c6c6" stroke-width="1" fill="none"/><path d="M899.5 237 V256" stroke="#c6c6c6" stroke-width="1" fill="none"/><path d="M974.5 237 V256" stroke="#c6c6c6" stroke-width="1" fill="none"/><path d="M1049.5 237 V256" stroke="#c6c6c6" stroke-width="1" fill="none"/><path d="M1124.5 237 V256" stroke="#c6c6c6" stroke-width="1" fill="none"/><path d="M1199.5 237 V256" stroke="#c6c6c6" stroke-width="1" fill="none"/><path d="M1274.5 237 V256" stroke="#c6c6c6" stroke-width="1" fill="none"/><path d="M0 275.5 H25" stroke="#c6c6c6" stroke-width="1" fill="none"/><path d="M0 333.5 H25" stroke="#c6c6c6" stroke-width="1" fill="none"/><path d="M0 356.5 H25" stroke="#c6c6c6" stroke-width="1" fill="none"/><path d="M0 375.5 H25" stroke="#c6c6c6" stroke-width="1" fill="none"/><path d="M0 394.5 H25" stroke="#c6c6c6" stroke-width="1" fill="none"/><path d="M0 413.5 H25" stroke="#c6c6c6" stroke-width="1" fill="none"/><path d="M0 432.5 H25" stroke="#c6c6c6" stroke-width="1" fill="none"/><path d="M0 451.5 H25" stroke="#c6c6c6" stroke-width="1" fill="none"/><path d="M0 470.5 H25" stroke="#c6c6c6" stroke-width="1" fill="none"/><path d="M0 489.5 H25" stroke="#c6c6c6" stroke-width="1" fill="none"/><path d="M0 508.5 H25" stroke="#c6c6c6" stroke-width="1" fill="none"/><path d="M0 527.5 H25" stroke="#c6c6c6" stroke-width="1" fill="none"/><path d="M0 546.5 H25" stroke="#c6c6c6" stroke-width="1" fill="none"/><path d="M0 565.5 H25" stroke="#c6c6c6" stroke-width="1" fill="none"/><path d="M0 592.5 H25" stroke="#c6c6c6" stroke-width="1" fill="none"/><path d="M0 612.5 H25" stroke="#c6c6c6" stroke-width="1" fill="none"/><path d="M0 631.5 H25" stroke="#c6c6c6" stroke-width="1" fill="none"/><path d="M0 650.5 H25" stroke="#c6c6c6" stroke-width="1" fill="none"/><path d="M0 669.5 H25" stroke="#c6c6c6" stroke-width="1" fill="none"/><path d="M78.5 256 V275" stroke="#d9d9d9" stroke-width="1" fill="none"/><path d="M156.5 256 V275" stroke="#d9d9d9" stroke-width="1" fill="none"/><path d="M247.5 256 V275" stroke="#d9d9d9" stroke-width="1" fill="none"/><path d="M338.5 256 V275" stroke="#d9d9d9" stroke-width="1" fill="none"/><path d="M433.5 256 V275" stroke="#d9d9d9" stroke-width="1" fill="none"/><path d="M508.5 256 V275" stroke="#d9d9d9" stroke-width="1" fill="none"/><path d="M602.5 256 V275" stroke="#d9d9d9" stroke-width="1" fill="none"/><path d="M689.5 256 V275" stroke="#d9d9d9" stroke-width="1" fill="none"/><path d="M797.5 256 V275" stroke="#d9d9d9" stroke-width="1" fill="none"/><path d="M899.5 256 V275" stroke="#d9d9d9" stroke-width="1" fill="none"/><path d="M974.5 256 V275" stroke="#d9d9d9" stroke-width="1" fill="none"/><path d="M1049.5 256 V275" stroke="#d9d9d9" stroke-width="1" fill="none"/><path d="M1124.5 256 V275" stroke="#d9d9d9" stroke-width="1" fill="none"/><path d="M1199.5 256 V275" stroke="#d9d9d9" stroke-width="1" fill="none"/><path d="M1274.5 256 V275" stroke="#d9d9d9" stroke-width="1" fill="none"/><path d="M899 275.5 H974" stroke="#d9d9d9" stroke-width="1" fill="none"/><path d="M974 275.5 H1049" stroke="#d9d9d9" stroke-width="1" fill="none"/><path d="M1049 275.5 H1124" stroke="#d9d9d9" stroke-width="1" fill="none"/><path d="M1124 275.5 H1199" stroke="#d9d9d9" stroke-width="1" fill="none"/><path d="M1199 275.5 H1274" stroke="#d9d9d9" stroke-width="1" fill="none"/><path d="M1274 275.5 H1338" stroke="#d9d9d9" stroke-width="1" fill="none"/><path d="M899.5 275 V333" stroke="#d9d9d9" stroke-width="1" fill="none"/><path d="M974.5 275 V333" stroke="#d9d9d9" stroke-width="1" fill="none"/><path d="M1049.5 275 V333" stroke="#d9d9d9" stroke-width="1" fill="none"/><path d="M1124.5 275 V333" stroke="#d9d9d9" stroke-width="1" fill="none"/><path d="M1199.5 275 V333" stroke="#d9d9d9" stroke-width="1" fill="none"/><path d="M1274.5 275 V333" stroke="#d9d9d9" stroke-width="1" fill="none"/><path d="M899 333.5 H974" stroke="#d9d9d9" stroke-width="1" fill="none"/><path d="M974 333.5 H1049" stroke="#d9d9d9" stroke-width="1" fill="none"/><path d="M1049 333.5 H1124" stroke="#d9d9d9" stroke-width="1" fill="none"/><path d="M1124 333.5 H1199" stroke="#d9d9d9" stroke-width="1" fill="none"/><path d="M1199 333.5 H1274" stroke="#d9d9d9" stroke-width="1" fill="none"/><path d="M1274 333.5 H1338" stroke="#d9d9d9" stroke-width="1" fill="none"/><path d="M899.5 333 V356" stroke="#d9d9d9" stroke-width="1" fill="none"/><path d="M974.5 333 V356" stroke="#d9d9d9" stroke-width="1" fill="none"/><path d="M1049.5 333 V356" stroke="#d9d9d9" stroke-width="1" fill="none"/><path d="M1124.5 333 V356" stroke="#d9d9d9" stroke-width="1" fill="none"/><path d="M1199.5 333 V356" stroke="#d9d9d9" stroke-width="1" fill="none"/><path d="M1274.5 333 V356" stroke="#d9d9d9" stroke-width="1" fill="none"/><path d="M899 356.5 H974" stroke="#d9d9d9" stroke-width="1" fill="none"/><path d="M974 356.5 H1049" stroke="#d9d9d9" stroke-width="1" fill="none"/><path d="M1049 356.5 H1124" stroke="#d9d9d9" stroke-width="1" fill="none"/><path d="M1124 356.5 H1199" stroke="#d9d9d9" stroke-width="1" fill="none"/><path d="M1199 356.5 H1274" stroke="#d9d9d9" stroke-width="1" fill="none"/><path d="M1274 356.5 H1338" stroke="#d9d9d9" stroke-width="1" fill="none"/><path d="M78.5 356 V375" stroke="#d9d9d9" stroke-width="1" fill="none"/><path d="M247.5 356 V375" stroke="#d9d9d9" stroke-width="1" fill="none"/><path d="M338.5 356 V375" stroke="#d9d9d9" stroke-width="1" fill="none"/><path d="M433.5 356 V375" stroke="#d9d9d9" stroke-width="1" fill="none"/><path d="M508.5 356 V375" stroke="#d9d9d9" stroke-width="1" fill="none"/><path d="M602.5 356 V375" stroke="#d9d9d9" stroke-width="1" fill="none"/><path d="M689.5 356 V375" stroke="#d9d9d9" stroke-width="1" fill="none"/><path d="M797.5 356 V375" stroke="#d9d9d9" stroke-width="1" fill="none"/><path d="M899.5 356 V375" stroke="#d9d9d9" stroke-width="1" fill="none"/><path d="M974.5 356 V375" stroke="#d9d9d9" stroke-width="1" fill="none"/><path d="M1049.5 356 V375" stroke="#d9d9d9" stroke-width="1" fill="none"/><path d="M1124.5 356 V375" stroke="#d9d9d9" stroke-width="1" fill="none"/><path d="M1199.5 356 V375" stroke="#d9d9d9" stroke-width="1" fill="none"/><path d="M1274.5 356 V375" stroke="#d9d9d9" stroke-width="1" fill="none"/><path d="M26 375.5 H78" stroke="#d9d9d9" stroke-width="1" fill="none"/><path d="M78 375.5 H156" stroke="#d9d9d9" stroke-width="1" fill="none"/><path d="M156 375.5 H247" stroke="#d9d9d9" stroke-width="1" fill="none"/><path d="M247 375.5 H338" stroke="#d9d9d9" stroke-width="1" fill="none"/><path d="M338 375.5 H433" stroke="#d9d9d9" stroke-width="1" fill="none"/><path d="M433 375.5 H508" stroke="#d9d9d9" stroke-width="1" fill="none"/><path d="M508 375.5 H602" stroke="#d9d9d9" stroke-width="1" fill="none"/><path d="M602 375.5 H689" stroke="#d9d9d9" stroke-width="1" fill="none"/><path d="M689 375.5 H797" stroke="#d9d9d9" stroke-width="1" fill="none"/><path d="M797 375.5 H899" stroke="#d9d9d9" stroke-width="1" fill="none"/><path d="M899 375.5 H974" stroke="#d9d9d9" stroke-width="1" fill="none"/><path d="M974 375.5 H1049" stroke="#d9d9d9" stroke-width="1" fill="none"/><path d="M1049 375.5 H1124" stroke="#d9d9d9" stroke-width="1" fill="none"/><path d="M1124 375.5 H1199" stroke="#d9d9d9" stroke-width="1" fill="none"/><path d="M1199 375.5 H1274" stroke="#d9d9d9" stroke-width="1" fill="none"/><path d="M1274 375.5 H1338" stroke="#d9d9d9" stroke-width="1" fill="none"/><path d="M78.5 375 V394" stroke="#d9d9d9" stroke-width="1" fill="none"/><path d="M156.5 375 V394" stroke="#d9d9d9" stroke-width="1" fill="none"/><path d="M247.5 375 V394" stroke="#d9d9d9" stroke-width="1" fill="none"/><path d="M338.5 375 V394" stroke="#d9d9d9" stroke-width="1" fill="none"/><path d="M433.5 375 V394" stroke="#d9d9d9" stroke-width="1" fill="none"/><path d="M508.5 375 V394" stroke="#d9d9d9" stroke-width="1" fill="none"/><path d="M602.5 375 V394" stroke="#d9d9d9" stroke-width="1" fill="none"/><path d="M689.5 375 V394" stroke="#d9d9d9" stroke-width="1" fill="none"/><path d="M797.5 375 V394" stroke="#d9d9d9" stroke-width="1" fill="none"/><path d="M899.5 375 V394" stroke="#d9d9d9" stroke-width="1" fill="none"/><path d="M974.5 375 V394" stroke="#d9d9d9" stroke-width="1" fill="none"/><path d="M1049.5 375 V394" stroke="#d9d9d9" stroke-width="1" fill="none"/><path d="M1124.5 375 V394" stroke="#d9d9d9" stroke-width="1" fill="none"/><path d="M1199.5 375 V394" stroke="#d9d9d9" stroke-width="1" fill="none"/><path d="M1274.5 375 V394" stroke="#d9d9d9" stroke-width="1" fill="none"/><path d="M26 394.5 H78" stroke="#d9d9d9" stroke-width="1" fill="none"/><path d="M78 394.5 H156" stroke="#d9d9d9" stroke-width="1" fill="none"/><path d="M156 394.5 H247" stroke="#d9d9d9" stroke-width="1" fill="none"/><path d="M247 394.5 H338" stroke="#d9d9d9" stroke-width="1" fill="none"/><path d="M338 394.5 H433" stroke="#d9d9d9" stroke-width="1" fill="none"/><path d="M433 394.5 H508" stroke="#d9d9d9" stroke-width="1" fill="none"/><path d="M508 394.5 H602" stroke="#d9d9d9" stroke-width="1" fill="none"/><path d="M602 394.5 H689" stroke="#d9d9d9" stroke-width="1" fill="none"/><path d="M689 394.5 H797" stroke="#d9d9d9" stroke-width="1" fill="none"/><path d="M797 394.5 H899" stroke="#d9d9d9" stroke-width="1" fill="none"/><path d="M899 394.5 H974" stroke="#d9d9d9" stroke-width="1" fill="none"/><path d="M974 394.5 H1049" stroke="#d9d9d9" stroke-width="1" fill="none"/><path d="M1049 394.5 H1124" stroke="#d9d9d9" stroke-width="1" fill="none"/><path d="M1124 394.5 H1199" stroke="#d9d9d9" stroke-width="1" fill="none"/><path d="M1199 394.5 H1274" stroke="#d9d9d9" stroke-width="1" fill="none"/><path d="M1274 394.5 H1338" stroke="#d9d9d9" stroke-width="1" fill="none"/><path d="M78.5 394 V413" stroke="#d9d9d9" stroke-width="1" fill="none"/><path d="M247.5 394 V413" stroke="#d9d9d9" stroke-width="1" fill="none"/><path d="M338.5 394 V413" stroke="#d9d9d9" stroke-width="1" fill="none"/><path d="M433.5 394 V413" stroke="#d9d9d9" stroke-width="1" fill="none"/><path d="M508.5 394 V413" stroke="#d9d9d9" stroke-width="1" fill="none"/><path d="M602.5 394 V413" stroke="#d9d9d9" stroke-width="1" fill="none"/><path d="M689.5 394 V413" stroke="#d9d9d9" stroke-width="1" fill="none"/><path d="M797.5 394 V413" stroke="#d9d9d9" stroke-width="1" fill="none"/><path d="M899.5 394 V413" stroke="#d9d9d9" stroke-width="1" fill="none"/><path d="M974.5 394 V413" stroke="#d9d9d9" stroke-width="1" fill="none"/><path d="M1049.5 394 V413" stroke="#d9d9d9" stroke-width="1" fill="none"/><path d="M1124.5 394 V413" stroke="#d9d9d9" stroke-width="1" fill="none"/><path d="M1199.5 394 V413" stroke="#d9d9d9" stroke-width="1" fill="none"/><path d="M1274.5 394 V413" stroke="#d9d9d9" stroke-width="1" fill="none"/><path d="M26 413.5 H78" stroke="#d9d9d9" stroke-width="1" fill="none"/><path d="M78 413.5 H156" stroke="#d9d9d9" stroke-width="1" fill="none"/><path d="M156 413.5 H247" stroke="#d9d9d9" stroke-width="1" fill="none"/><path d="M247 413.5 H338" stroke="#d9d9d9" stroke-width="1" fill="none"/><path d="M338 413.5 H433" stroke="#d9d9d9" stroke-width="1" fill="none"/><path d="M433 413.5 H508" stroke="#d9d9d9" stroke-width="1" fill="none"/><path d="M508 413.5 H602" stroke="#d9d9d9" stroke-width="1" fill="none"/><path d="M602 413.5 H689" stroke="#d9d9d9" stroke-width="1" fill="none"/><path d="M689 413.5 H797" stroke="#d9d9d9" stroke-width="1" fill="none"/><path d="M797 413.5 H899" stroke="#d9d9d9" stroke-width="1" fill="none"/><path d="M899 413.5 H974" stroke="#d9d9d9" stroke-width="1" fill="none"/><path d="M974 413.5 H1049" stroke="#d9d9d9" stroke-width="1" fill="none"/><path d="M1049 413.5 H1124" stroke="#d9d9d9" stroke-width="1" fill="none"/><path d="M1124 413.5 H1199" stroke="#d9d9d9" stroke-width="1" fill="none"/><path d="M1199 413.5 H1274" stroke="#d9d9d9" stroke-width="1" fill="none"/><path d="M1274 413.5 H1338" stroke="#d9d9d9" stroke-width="1" fill="none"/><path d="M78.5 413 V432" stroke="#d9d9d9" stroke-width="1" fill="none"/><path d="M247.5 413 V432" stroke="#d9d9d9" stroke-width="1" fill="none"/><path d="M338.5 413 V432" stroke="#d9d9d9" stroke-width="1" fill="none"/><path d="M433.5 413 V432" stroke="#d9d9d9" stroke-width="1" fill="none"/><path d="M508.5 413 V432" stroke="#d9d9d9" stroke-width="1" fill="none"/><path d="M602.5 413 V432" stroke="#d9d9d9" stroke-width="1" fill="none"/><path d="M689.5 413 V432" stroke="#d9d9d9" stroke-width="1" fill="none"/><path d="M797.5 413 V432" stroke="#d9d9d9" stroke-width="1" fill="none"/><path d="M899.5 413 V432" stroke="#d9d9d9" stroke-width="1" fill="none"/><path d="M974.5 413 V432" stroke="#d9d9d9" stroke-width="1" fill="none"/><path d="M1049.5 413 V432" stroke="#d9d9d9" stroke-width="1" fill="none"/><path d="M1124.5 413 V432" stroke="#d9d9d9" stroke-width="1" fill="none"/><path d="M1199.5 413 V432" stroke="#d9d9d9" stroke-width="1" fill="none"/><path d="M1274.5 413 V432" stroke="#d9d9d9" stroke-width="1" fill="none"/><path d="M26 432.5 H78" stroke="#d9d9d9" stroke-width="1" fill="none"/><path d="M78 432.5 H156" stroke="#d9d9d9" stroke-width="1" fill="none"/><path d="M156 432.5 H247" stroke="#d9d9d9" stroke-width="1" fill="none"/><path d="M247 432.5 H338" stroke="#d9d9d9" stroke-width="1" fill="none"/><path d="M338 432.5 H433" stroke="#d9d9d9" stroke-width="1" fill="none"/><path d="M433 432.5 H508" stroke="#d9d9d9" stroke-width="1" fill="none"/><path d="M508 432.5 H602" stroke="#d9d9d9" stroke-width="1" fill="none"/><path d="M602 432.5 H689" stroke="#d9d9d9" stroke-width="1" fill="none"/><path d="M689 432.5 H797" stroke="#d9d9d9" stroke-width="1" fill="none"/><path d="M797 432.5 H899" stroke="#d9d9d9" stroke-width="1" fill="none"/><path d="M899 432.5 H974" stroke="#d9d9d9" stroke-width="1" fill="none"/><path d="M974 432.5 H1049" stroke="#d9d9d9" stroke-width="1" fill="none"/><path d="M1049 432.5 H1124" stroke="#d9d9d9" stroke-width="1" fill="none"/><path d="M1124 432.5 H1199" stroke="#d9d9d9" stroke-width="1" fill="none"/><path d="M1199 432.5 H1274" stroke="#d9d9d9" stroke-width="1" fill="none"/><path d="M1274 432.5 H1338" stroke="#d9d9d9" stroke-width="1" fill="none"/><path d="M78.5 432 V451" stroke="#d9d9d9" stroke-width="1" fill="none"/><path d="M338.5 432 V451" stroke="#d9d9d9" stroke-width="1" fill="none"/><path d="M433.5 432 V451" stroke="#d9d9d9" stroke-width="1" fill="none"/><path d="M508.5 432 V451" stroke="#d9d9d9" stroke-width="1" fill="none"/><path d="M602.5 432 V451" stroke="#d9d9d9" stroke-width="1" fill="none"/><path d="M689.5 432 V451" stroke="#d9d9d9" stroke-width="1" fill="none"/><path d="M797.5 432 V451" stroke="#d9d9d9" stroke-width="1" fill="none"/><path d="M899.5 432 V451" stroke="#d9d9d9" stroke-width="1" fill="none"/><path d="M974.5 432 V451" stroke="#d9d9d9" stroke-width="1" fill="none"/><path d="M1049.5 432 V451" stroke="#d9d9d9" stroke-width="1" fill="none"/><path d="M1124.5 432 V451" stroke="#d9d9d9" stroke-width="1" fill="none"/><path d="M1199.5 432 V451" stroke="#d9d9d9" stroke-width="1" fill="none"/><path d="M1274.5 432 V451" stroke="#d9d9d9" stroke-width="1" fill="none"/><path d="M26 451.5 H78" stroke="#d9d9d9" stroke-width="1" fill="none"/><path d="M78 451.5 H156" stroke="#d9d9d9" stroke-width="1" fill="none"/><path d="M156 451.5 H247" stroke="#d9d9d9" stroke-width="1" fill="none"/><path d="M247 451.5 H338" stroke="#d9d9d9" stroke-width="1" fill="none"/><path d="M338 451.5 H433" stroke="#d9d9d9" stroke-width="1" fill="none"/><path d="M433 451.5 H508" stroke="#d9d9d9" stroke-width="1" fill="none"/><path d="M508 451.5 H602" stroke="#d9d9d9" stroke-width="1" fill="none"/><path d="M602 451.5 H689" stroke="#d9d9d9" stroke-width="1" fill="none"/><path d="M689 451.5 H797" stroke="#d9d9d9" stroke-width="1" fill="none"/><path d="M797 451.5 H899" stroke="#d9d9d9" stroke-width="1" fill="none"/><path d="M899 451.5 H974" stroke="#d9d9d9" stroke-width="1" fill="none"/><path d="M974 451.5 H1049" stroke="#d9d9d9" stroke-width="1" fill="none"/><path d="M1049 451.5 H1124" stroke="#d9d9d9" stroke-width="1" fill="none"/><path d="M1124 451.5 H1199" stroke="#d9d9d9" stroke-width="1" fill="none"/><path d="M1199 451.5 H1274" stroke="#d9d9d9" stroke-width="1" fill="none"/><path d="M1274 451.5 H1338" stroke="#d9d9d9" stroke-width="1" fill="none"/><path d="M78.5 451 V470" stroke="#d9d9d9" stroke-width="1" fill="none"/><path d="M433.5 451 V470" stroke="#d9d9d9" stroke-width="1" fill="none"/><path d="M508.5 451 V470" stroke="#d9d9d9" stroke-width="1" fill="none"/><path d="M602.5 451 V470" stroke="#d9d9d9" stroke-width="1" fill="none"/><path d="M689.5 451 V470" stroke="#d9d9d9" stroke-width="1" fill="none"/><path d="M797.5 451 V470" stroke="#d9d9d9" stroke-width="1" fill="none"/><path d="M899.5 451 V470" stroke="#d9d9d9" stroke-width="1" fill="none"/><path d="M974.5 451 V470" stroke="#d9d9d9" stroke-width="1" fill="none"/><path d="M1049.5 451 V470" stroke="#d9d9d9" stroke-width="1" fill="none"/><path d="M1124.5 451 V470" stroke="#d9d9d9" stroke-width="1" fill="none"/><path d="M1199.5 451 V470" stroke="#d9d9d9" stroke-width="1" fill="none"/><path d="M1274.5 451 V470" stroke="#d9d9d9" stroke-width="1" fill="none"/><path d="M26 470.5 H78" stroke="#d9d9d9" stroke-width="1" fill="none"/><path d="M78 470.5 H156" stroke="#d9d9d9" stroke-width="1" fill="none"/><path d="M156 470.5 H247" stroke="#d9d9d9" stroke-width="1" fill="none"/><path d="M247 470.5 H338" stroke="#d9d9d9" stroke-width="1" fill="none"/><path d="M338 470.5 H433" stroke="#d9d9d9" stroke-width="1" fill="none"/><path d="M433 470.5 H508" stroke="#d9d9d9" stroke-width="1" fill="none"/><path d="M508 470.5 H602" stroke="#d9d9d9" stroke-width="1" fill="none"/><path d="M602 470.5 H689" stroke="#d9d9d9" stroke-width="1" fill="none"/><path d="M689 470.5 H797" stroke="#d9d9d9" stroke-width="1" fill="none"/><path d="M797 470.5 H899" stroke="#d9d9d9" stroke-width="1" fill="none"/><path d="M899 470.5 H974" stroke="#d9d9d9" stroke-width="1" fill="none"/><path d="M974 470.5 H1049" stroke="#d9d9d9" stroke-width="1" fill="none"/><path d="M1049 470.5 H1124" stroke="#d9d9d9" stroke-width="1" fill="none"/><path d="M1124 470.5 H1199" stroke="#d9d9d9" stroke-width="1" fill="none"/><path d="M1199 470.5 H1274" stroke="#d9d9d9" stroke-width="1" fill="none"/><path d="M1274 470.5 H1338" stroke="#d9d9d9" stroke-width="1" fill="none"/><path d="M78.5 470 V489" stroke="#d9d9d9" stroke-width="1" fill="none"/><path d="M338.5 470 V489" stroke="#d9d9d9" stroke-width="1" fill="none"/><path d="M433.5 470 V489" stroke="#d9d9d9" stroke-width="1" fill="none"/><path d="M508.5 470 V489" stroke="#d9d9d9" stroke-width="1" fill="none"/><path d="M602.5 470 V489" stroke="#d9d9d9" stroke-width="1" fill="none"/><path d="M689.5 470 V489" stroke="#d9d9d9" stroke-width="1" fill="none"/><path d="M797.5 470 V489" stroke="#d9d9d9" stroke-width="1" fill="none"/><path d="M899.5 470 V489" stroke="#d9d9d9" stroke-width="1" fill="none"/><path d="M974.5 470 V489" stroke="#d9d9d9" stroke-width="1" fill="none"/><path d="M1049.5 470 V489" stroke="#d9d9d9" stroke-width="1" fill="none"/><path d="M1124.5 470 V489" stroke="#d9d9d9" stroke-width="1" fill="none"/><path d="M1199.5 470 V489" stroke="#d9d9d9" stroke-width="1" fill="none"/><path d="M1274.5 470 V489" stroke="#d9d9d9" stroke-width="1" fill="none"/><path d="M26 489.5 H78" stroke="#d9d9d9" stroke-width="1" fill="none"/><path d="M78 489.5 H156" stroke="#d9d9d9" stroke-width="1" fill="none"/><path d="M156 489.5 H247" stroke="#d9d9d9" stroke-width="1" fill="none"/><path d="M247 489.5 H338" stroke="#d9d9d9" stroke-width="1" fill="none"/><path d="M338 489.5 H433" stroke="#d9d9d9" stroke-width="1" fill="none"/><path d="M433 489.5 H508" stroke="#d9d9d9" stroke-width="1" fill="none"/><path d="M508 489.5 H602" stroke="#d9d9d9" stroke-width="1" fill="none"/><path d="M602 489.5 H689" stroke="#d9d9d9" stroke-width="1" fill="none"/><path d="M689 489.5 H797" stroke="#d9d9d9" stroke-width="1" fill="none"/><path d="M797 489.5 H899" stroke="#d9d9d9" stroke-width="1" fill="none"/><path d="M899 489.5 H974" stroke="#d9d9d9" stroke-width="1" fill="none"/><path d="M974 489.5 H1049" stroke="#d9d9d9" stroke-width="1" fill="none"/><path d="M1049 489.5 H1124" stroke="#d9d9d9" stroke-width="1" fill="none"/><path d="M1124 489.5 H1199" stroke="#d9d9d9" stroke-width="1" fill="none"/><path d="M1199 489.5 H1274" stroke="#d9d9d9" stroke-width="1" fill="none"/><path d="M1274 489.5 H1338" stroke="#d9d9d9" stroke-width="1" fill="none"/><path d="M78.5 489 V508" stroke="#d9d9d9" stroke-width="1" fill="none"/><path d="M156.5 489 V508" stroke="#d9d9d9" stroke-width="1" fill="none"/><path d="M247.5 489 V508" stroke="#d9d9d9" stroke-width="1" fill="none"/><path d="M338.5 489 V508" stroke="#d9d9d9" stroke-width="1" fill="none"/><path d="M433.5 489 V508" stroke="#d9d9d9" stroke-width="1" fill="none"/><path d="M508.5 489 V508" stroke="#d9d9d9" stroke-width="1" fill="none"/><path d="M602.5 489 V508" stroke="#d9d9d9" stroke-width="1" fill="none"/><path d="M689.5 489 V508" stroke="#d9d9d9" stroke-width="1" fill="none"/><path d="M797.5 489 V508" stroke="#d9d9d9" stroke-width="1" fill="none"/><path d="M899.5 489 V508" stroke="#d9d9d9" stroke-width="1" fill="none"/><path d="M974.5 489 V508" stroke="#d9d9d9" stroke-width="1" fill="none"/><path d="M1049.5 489 V508" stroke="#d9d9d9" stroke-width="1" fill="none"/><path d="M1124.5 489 V508" stroke="#d9d9d9" stroke-width="1" fill="none"/><path d="M1199.5 489 V508" stroke="#d9d9d9" stroke-width="1" fill="none"/><path d="M1274.5 489 V508" stroke="#d9d9d9" stroke-width="1" fill="none"/><path d="M26 508.5 H78" stroke="#d9d9d9" stroke-width="1" fill="none"/><path d="M78 508.5 H156" stroke="#d9d9d9" stroke-width="1" fill="none"/><path d="M156 508.5 H247" stroke="#d9d9d9" stroke-width="1" fill="none"/><path d="M247 508.5 H338" stroke="#d9d9d9" stroke-width="1" fill="none"/><path d="M338 508.5 H433" stroke="#d9d9d9" stroke-width="1" fill="none"/><path d="M433 508.5 H508" stroke="#d9d9d9" stroke-width="1" fill="none"/><path d="M508 508.5 H602" stroke="#d9d9d9" stroke-width="1" fill="none"/><path d="M602 508.5 H689" stroke="#d9d9d9" stroke-width="1" fill="none"/><path d="M689 508.5 H797" stroke="#d9d9d9" stroke-width="1" fill="none"/><path d="M797 508.5 H899" stroke="#d9d9d9" stroke-width="1" fill="none"/><path d="M899 508.5 H974" stroke="#d9d9d9" stroke-width="1" fill="none"/><path d="M974 508.5 H1049" stroke="#d9d9d9" stroke-width="1" fill="none"/><path d="M1049 508.5 H1124" stroke="#d9d9d9" stroke-width="1" fill="none"/><path d="M1124 508.5 H1199" stroke="#d9d9d9" stroke-width="1" fill="none"/><path d="M1199 508.5 H1274" stroke="#d9d9d9" stroke-width="1" fill="none"/><path d="M1274 508.5 H1338" stroke="#d9d9d9" stroke-width="1" fill="none"/><path d="M78.5 508 V527" stroke="#d9d9d9" stroke-width="1" fill="none"/><path d="M433.5 508 V527" stroke="#d9d9d9" stroke-width="1" fill="none"/><path d="M508.5 508 V527" stroke="#d9d9d9" stroke-width="1" fill="none"/><path d="M602.5 508 V527" stroke="#d9d9d9" stroke-width="1" fill="none"/><path d="M689.5 508 V527" stroke="#d9d9d9" stroke-width="1" fill="none"/><path d="M797.5 508 V527" stroke="#d9d9d9" stroke-width="1" fill="none"/><path d="M899.5 508 V527" stroke="#d9d9d9" stroke-width="1" fill="none"/><path d="M974.5 508 V527" stroke="#d9d9d9" stroke-width="1" fill="none"/><path d="M1049.5 508 V527" stroke="#d9d9d9" stroke-width="1" fill="none"/><path d="M1124.5 508 V527" stroke="#d9d9d9" stroke-width="1" fill="none"/><path d="M1199.5 508 V527" stroke="#d9d9d9" stroke-width="1" fill="none"/><path d="M1274.5 508 V527" stroke="#d9d9d9" stroke-width="1" fill="none"/><path d="M26 527.5 H78" stroke="#d9d9d9" stroke-width="1" fill="none"/><path d="M78 527.5 H156" stroke="#d9d9d9" stroke-width="1" fill="none"/><path d="M156 527.5 H247" stroke="#d9d9d9" stroke-width="1" fill="none"/><path d="M247 527.5 H338" stroke="#d9d9d9" stroke-width="1" fill="none"/><path d="M338 527.5 H433" stroke="#d9d9d9" stroke-width="1" fill="none"/><path d="M433 527.5 H508" stroke="#d9d9d9" stroke-width="1" fill="none"/><path d="M508 527.5 H602" stroke="#d9d9d9" stroke-width="1" fill="none"/><path d="M602 527.5 H689" stroke="#d9d9d9" stroke-width="1" fill="none"/><path d="M689 527.5 H797" stroke="#d9d9d9" stroke-width="1" fill="none"/><path d="M797 527.5 H899" stroke="#d9d9d9" stroke-width="1" fill="none"/><path d="M899 527.5 H974" stroke="#d9d9d9" stroke-width="1" fill="none"/><path d="M974 527.5 H1049" stroke="#d9d9d9" stroke-width="1" fill="none"/><path d="M1049 527.5 H1124" stroke="#d9d9d9" stroke-width="1" fill="none"/><path d="M1124 527.5 H1199" stroke="#d9d9d9" stroke-width="1" fill="none"/><path d="M1199 527.5 H1274" stroke="#d9d9d9" stroke-width="1" fill="none"/><path d="M1274 527.5 H1338" stroke="#d9d9d9" stroke-width="1" fill="none"/><path d="M78.5 527 V546" stroke="#d9d9d9" stroke-width="1" fill="none"/><path d="M156.5 527 V546" stroke="#d9d9d9" stroke-width="1" fill="none"/><path d="M247.5 527 V546" stroke="#d9d9d9" stroke-width="1" fill="none"/><path d="M338.5 527 V546" stroke="#d9d9d9" stroke-width="1" fill="none"/><path d="M433.5 527 V546" stroke="#d9d9d9" stroke-width="1" fill="none"/><path d="M508.5 527 V546" stroke="#d9d9d9" stroke-width="1" fill="none"/><path d="M602.5 527 V546" stroke="#d9d9d9" stroke-width="1" fill="none"/><path d="M689.5 527 V546" stroke="#d9d9d9" stroke-width="1" fill="none"/><path d="M797.5 527 V546" stroke="#d9d9d9" stroke-width="1" fill="none"/><path d="M899.5 527 V546" stroke="#d9d9d9" stroke-width="1" fill="none"/><path d="M974.5 527 V546" stroke="#d9d9d9" stroke-width="1" fill="none"/><path d="M1049.5 527 V546" stroke="#d9d9d9" stroke-width="1" fill="none"/><path d="M1124.5 527 V546" stroke="#d9d9d9" stroke-width="1" fill="none"/><path d="M1199.5 527 V546" stroke="#d9d9d9" stroke-width="1" fill="none"/><path d="M1274.5 527 V546" stroke="#d9d9d9" stroke-width="1" fill="none"/><path d="M26 546.5 H78" stroke="#d9d9d9" stroke-width="1" fill="none"/><path d="M78 546.5 H156" stroke="#d9d9d9" stroke-width="1" fill="none"/><path d="M156 546.5 H247" stroke="#d9d9d9" stroke-width="1" fill="none"/><path d="M247 546.5 H338" stroke="#d9d9d9" stroke-width="1" fill="none"/><path d="M338 546.5 H433" stroke="#d9d9d9" stroke-width="1" fill="none"/><path d="M433 546.5 H508" stroke="#d9d9d9" stroke-width="1" fill="none"/><path d="M508 546.5 H602" stroke="#d9d9d9" stroke-width="1" fill="none"/><path d="M602 546.5 H689" stroke="#d9d9d9" stroke-width="1" fill="none"/><path d="M689 546.5 H797" stroke="#d9d9d9" stroke-width="1" fill="none"/><path d="M797 546.5 H899" stroke="#d9d9d9" stroke-width="1" fill="none"/><path d="M899 546.5 H974" stroke="#d9d9d9" stroke-width="1" fill="none"/><path d="M974 546.5 H1049" stroke="#d9d9d9" stroke-width="1" fill="none"/><path d="M1049 546.5 H1124" stroke="#d9d9d9" stroke-width="1" fill="none"/><path d="M1124 546.5 H1199" stroke="#d9d9d9" stroke-width="1" fill="none"/><path d="M1199 546.5 H1274" stroke="#d9d9d9" stroke-width="1" fill="none"/><path d="M1274 546.5 H1338" stroke="#d9d9d9" stroke-width="1" fill="none"/><path d="M78.5 546 V565" stroke="#d9d9d9" stroke-width="1" fill="none"/><path d="M602.5 546 V565" stroke="#d9d9d9" stroke-width="1" fill="none"/><path d="M689.5 546 V565" stroke="#d9d9d9" stroke-width="1" fill="none"/><path d="M797.5 546 V565" stroke="#d9d9d9" stroke-width="1" fill="none"/><path d="M899.5 546 V565" stroke="#d9d9d9" stroke-width="1" fill="none"/><path d="M974.5 546 V565" stroke="#d9d9d9" stroke-width="1" fill="none"/><path d="M1049.5 546 V565" stroke="#d9d9d9" stroke-width="1" fill="none"/><path d="M1124.5 546 V565" stroke="#d9d9d9" stroke-width="1" fill="none"/><path d="M1199.5 546 V565" stroke="#d9d9d9" stroke-width="1" fill="none"/><path d="M1274.5 546 V565" stroke="#d9d9d9" stroke-width="1" fill="none"/><path d="M26 565.5 H78" stroke="#d9d9d9" stroke-width="1" fill="none"/><path d="M899 565.5 H974" stroke="#d9d9d9" stroke-width="1" fill="none"/><path d="M974 565.5 H1049" stroke="#d9d9d9" stroke-width="1" fill="none"/><path d="M1049 565.5 H1124" stroke="#d9d9d9" stroke-width="1" fill="none"/><path d="M1124 565.5 H1199" stroke="#d9d9d9" stroke-width="1" fill="none"/><path d="M1199 565.5 H1274" stroke="#d9d9d9" stroke-width="1" fill="none"/><path d="M1274 565.5 H1338" stroke="#d9d9d9" stroke-width="1" fill="none"/><path d="M974.5 565 V591" stroke="#d9d9d9" stroke-width="1" fill="none"/><path d="M1049.5 565 V591" stroke="#d9d9d9" stroke-width="1" fill="none"/><path d="M1124.5 565 V591" stroke="#d9d9d9" stroke-width="1" fill="none"/><path d="M1199.5 565 V591" stroke="#d9d9d9" stroke-width="1" fill="none"/><path d="M1274.5 565 V591" stroke="#d9d9d9" stroke-width="1" fill="none"/><path d="M26 631.5 H78" stroke="#d9d9d9" stroke-width="1" fill="none"/><path d="M974.5 631 V650" stroke="#d9d9d9" stroke-width="1" fill="none"/><path d="M1049.5 631 V650" stroke="#d9d9d9" stroke-width="1" fill="none"/><path d="M1124.5 631 V650" stroke="#d9d9d9" stroke-width="1" fill="none"/><path d="M1199.5 631 V650" stroke="#d9d9d9" stroke-width="1" fill="none"/><path d="M1274.5 631 V650" stroke="#d9d9d9" stroke-width="1" fill="none"/><path d="M26 650.5 H78" stroke="#d9d9d9" stroke-width="1" fill="none"/><path d="M899 650.5 H974" stroke="#d9d9d9" stroke-width="1" fill="none"/><path d="M974 650.5 H1049" stroke="#d9d9d9" stroke-width="1" fill="none"/><path d="M1049 650.5 H1124" stroke="#d9d9d9" stroke-width="1" fill="none"/><path d="M1124 650.5 H1199" stroke="#d9d9d9" stroke-width="1" fill="none"/><path d="M1199 650.5 H1274" stroke="#d9d9d9" stroke-width="1" fill="none"/><path d="M1274 650.5 H1338" stroke="#d9d9d9" stroke-width="1" fill="none"/><path d="M974.5 650 V669" stroke="#d9d9d9" stroke-width="1" fill="none"/><path d="M1049.5 650 V669" stroke="#d9d9d9" stroke-width="1" fill="none"/><path d="M1124.5 650 V669" stroke="#d9d9d9" stroke-width="1" fill="none"/><path d="M1199.5 650 V669" stroke="#d9d9d9" stroke-width="1" fill="none"/><path d="M1274.5 650 V669" stroke="#d9d9d9" stroke-width="1" fill="none"/><path d="M26 669.5 H78" stroke="#d9d9d9" stroke-width="1" fill="none"/><path d="M899 669.5 H974" stroke="#d9d9d9" stroke-width="1" fill="none"/><path d="M974 669.5 H1049" stroke="#d9d9d9" stroke-width="1" fill="none"/><path d="M1049 669.5 H1124" stroke="#d9d9d9" stroke-width="1" fill="none"/><path d="M1124 669.5 H1199" stroke="#d9d9d9" stroke-width="1" fill="none"/><path d="M1199 669.5 H1274" stroke="#d9d9d9" stroke-width="1" fill="none"/><path d="M1274 669.5 H1338" stroke="#d9d9d9" stroke-width="1" fill="none"/><path d="M974.5 669 V678" stroke="#d9d9d9" stroke-width="1" fill="none"/><path d="M1049.5 669 V678" stroke="#d9d9d9" stroke-width="1" fill="none"/><path d="M1124.5 669 V678" stroke="#d9d9d9" stroke-width="1" fill="none"/><path d="M1199.5 669 V678" stroke="#d9d9d9" stroke-width="1" fill="none"/><path d="M1274.5 669 V678" stroke="#d9d9d9" stroke-width="1" fill="none"/></svg>
<div class="a" style="left:27px;top:277px;width:871px;height:55px;background:#d9d9d9"></div>
<div class="a" style="left:27px;top:335px;width:871px;height:20px;background:#d9d9d9"></div>
<div class="a" style="left:80px;top:567px;width:818px;height:64px;background:#d9d9d9"></div>
<svg class="a" style="left:0px;top:0px;shape-rendering:crispEdges;pointer-events:none" width="1360" height="768" viewBox="0 0 1360 768"><path d="M26 274.5 H901 M26 276.5 H899 M26.5 276 V333 M898.5 276 V333 M900.5 274 V335 M26 332.5 H899 M26 334.5 H899 M26.5 334 V356 M898.5 334 V356 M26 355.5 H901 M26 357.5 H901 M900.5 334 V358 M508 394.5 H603 M508 413.5 H603 M508.5 394 V414 M602.5 394 V414 M689 394.5 H798 M689 413.5 H798 M689.5 394 V414 M797.5 394 V414 M508 413.5 H603 M508 432.5 H603 M508.5 413 V433 M602.5 413 V433 M508 432.5 H603 M508 451.5 H603 M508.5 432 V452 M602.5 432 V452 M508 451.5 H603 M508 470.5 H603 M508.5 451 V471 M602.5 451 V471 M508 470.5 H603 M508 489.5 H603 M508.5 470 V490 M602.5 470 V490 M508 489.5 H603 M508 508.5 H603 M508.5 489 V509 M602.5 489 V509 M508 508.5 H603 M508 527.5 H603 M508.5 508 V528 M602.5 508 V528 M689 508.5 H798 M689 527.5 H798 M689.5 508 V528 M797.5 508 V528 M77 565.5 H902 M79 567.5 H900 M77.5 565 V679 M79.5 567 V679 M899.5 567 V679 M901.5 565 V632 M901.5 650 V679 M156.5 567 V679 M247.5 567 V679 M338.5 567 V679 M433.5 567 V679 M797.5 567 V679 M508.5 612 V679 M602.5 612 V679 M689.5 612 V679 M435.5 631 V651 M156 612.5 H434 M433 591.5 H798 M433 612.5 H798 M79 631.5 H900 M79 650.5 H900 M79 669.5 H900" stroke="#000" stroke-width="1" fill="none"/></svg>
<div class="a" style="left:507px;top:393px;width:97px;height:22px;border:2px solid #217346"></div>
<div class="a" style="left:599px;top:410px;width:7px;height:7px;background:#217346;border:1px solid #fff"></div>
<div class="t" style="left:47.50px;top:242.02px;font-size:12px;color:#262626;">A</div>
<div class="t" style="left:113.00px;top:242.02px;font-size:12px;color:#262626;">B</div>
<div class="t" style="left:197.17px;top:242.02px;font-size:12px;color:#262626;">C</div>
<div class="t" style="left:288.17px;top:242.02px;font-size:12px;color:#262626;">D</div>
<div class="t" style="left:381.50px;top:242.02px;font-size:12px;color:#262626;">E</div>
<div class="t" style="left:466.83px;top:242.02px;font-size:12px;color:#262626;">F</div>
<div class="t" style="left:550.33px;top:242.02px;font-size:12px;color:#217346;">G</div>
<div class="t" style="left:641.17px;top:242.02px;font-size:12px;color:#262626;">H</div>
<div class="t" style="left:741.33px;top:242.02px;font-size:12px;color:#262626;">I</div>
<div class="t" style="left:845.00px;top:242.02px;font-size:12px;color:#262626;">J</div>
<div class="t" style="left:932.50px;top:242.02px;font-size:12px;color:#262626;">K</div>
<div class="t" style="left:1008.16px;top:242.02px;font-size:12px;color:#262626;">L</div>
<div class="t" style="left:1081.50px;top:242.02px;font-size:12px;color:#262626;">M</div>
<div class="t" style="left:1157.17px;top:242.02px;font-size:12px;color:#262626;">N</div>
<div class="t" style="left:1231.83px;top:242.02px;font-size:12px;color:#262626;">O</div>
<div class="t" style="left:1307.50px;top:242.02px;font-size:12px;color:#262626;">P</div>
<div class="t" style="left:9.16px;top:261.02px;font-size:12px;color:#262626;">1</div>
<div class="t" style="left:9.16px;top:319.02px;font-size:12px;color:#262626;">2</div>
<div class="t" style="left:9.16px;top:342.02px;font-size:12px;color:#262626;">3</div>
<div class="t" style="left:9.16px;top:361.02px;font-size:12px;color:#262626;">4</div>
<div class="t" style="left:9.16px;top:380.02px;font-size:12px;color:#262626;">5</div>
<div class="t" style="left:9.16px;top:399.02px;font-size:12px;color:#217346;">6</div>
<div class="t" style="left:9.16px;top:418.02px;font-size:12px;color:#262626;">7</div>
<div class="t" style="left:9.16px;top:437.02px;font-size:12px;color:#262626;">8</div>
<div class="t" style="left:9.16px;top:456.02px;font-size:12px;color:#262626;">9</div>
<div class="t" style="left:5.83px;top:475.02px;font-size:12px;color:#262626;letter-spacing:0.000px;">10</div>
<div class="t" style="left:6.27px;top:494.02px;font-size:12px;color:#262626;letter-spacing:0.000px;">11</div>
<div class="t" style="left:5.83px;top:513.02px;font-size:12px;color:#262626;letter-spacing:0.000px;">12</div>
<div class="t" style="left:5.83px;top:532.02px;font-size:12px;color:#262626;letter-spacing:0.000px;">13</div>
<div class="t" style="left:5.83px;top:551.02px;font-size:12px;color:#262626;letter-spacing:0.000px;">14</div>
<div class="t" style="left:5.83px;top:578.02px;font-size:12px;color:#262626;letter-spacing:0.000px;">15</div>
<div class="t" style="left:5.83px;top:598.02px;font-size:12px;color:#262626;letter-spacing:0.000px;">16</div>
<div class="t" style="left:5.83px;top:617.02px;font-size:12px;color:#262626;letter-spacing:0.000px;">17</div>
<div class="t" style="left:5.83px;top:636.02px;font-size:12px;color:#262626;letter-spacing:0.000px;">18</div>
<div class="t" style="left:5.83px;top:655.02px;font-size:12px;color:#262626;letter-spacing:0.000px;">19</div>
<div class="t" style="left:5.83px;top:674.02px;font-size:12px;color:#262626;letter-spacing:0.000px;">20</div>
<div class="t" style="left:344.30px;top:291.52px;font-size:10px;color:#000;letter-spacing:-0.419px;">MATRICES RECOPILACION INFORMACIÓN PRIMARIA</div>
<div class="t" style="left:270.00px;top:306.52px;font-size:10px;color:#000;letter-spacing:-0.588px;">(PROCESO DE TRANSICIÓN DE AUTORIDADES EN EL GAD PARROQUIAL RURAL DE xxxx)</div>
<div class="t" style="left:433.00px;top:339.52px;font-size:10px;color:#000;letter-spacing:0.220px;">Planificación</div>
<div class="t" style="left:81.50px;top:361.52px;font-size:11px;color:#000;letter-spacing:-0.182px;font-weight:bold;">PLANIFICACIÓN</div>
<div class="t" style="left:28.40px;top:400.77px;font-size:9.5px;color:#000;letter-spacing:0.238px;">1.-</div>
<div class="t" style="left:80.70px;top:400.77px;font-size:9.5px;color:#000;letter-spacing:0.098px;">¿Dispone el GAD de PDOT?</div>
<div class="t" style="left:28.40px;top:419.77px;font-size:9.5px;color:#000;letter-spacing:0.238px;">2.-</div>
<div class="t" style="left:81.50px;top:419.77px;font-size:9.5px;color:#000;letter-spacing:0.433px;">Fecha de  última actualización</div>
<div class="t" style="left:81.00px;top:438.77px;font-size:9.5px;color:#000;letter-spacing:0.405px;">Fecha de aprobación por el Consejo de Planificación</div>
<div class="t" style="left:81.00px;top:457.77px;font-size:9.5px;color:#000;letter-spacing:0.370px;">Fecha de resolución del GAD Parroquial Rural (2da sesión)</div>
<div class="t" style="left:81.00px;top:476.77px;font-size:9.5px;color:#000;letter-spacing:0.367px;">Fecha y Número de publicación en el Registro Oficial</div>
<div class="t" style="left:28.40px;top:514.77px;font-size:9.5px;color:#000;letter-spacing:0.238px;">3.-</div>
<div class="t" style="left:81.00px;top:514.77px;font-size:9.5px;color:#000;letter-spacing:0.296px;">¿El PDOT se encuentra actualizado en la plataforma SIGAD?</div>
<div class="t" style="left:28.40px;top:552.77px;font-size:9.5px;color:#000;letter-spacing:0.238px;">4.-</div>
<div class="t" style="left:81.00px;top:552.77px;font-size:9.5px;color:#000;letter-spacing:0.375px;">Detalle los planes, programas y proyectos definidos en el PDOT/ POA y su estado de ejecución</div>
<div class="t" style="left:497.60px;top:400.77px;font-size:9.5px;color:#000;letter-spacing:-0.538px;">SI</div>
<div class="t" style="left:673.50px;top:400.77px;font-size:9.5px;color:#000;letter-spacing:-0.525px;">NO</div>
<div class="t" style="left:552.33px;top:400.77px;font-size:9.5px;color:#000;">X</div>
<div class="t" style="left:497.60px;top:514.77px;font-size:9.5px;color:#000;letter-spacing:-0.538px;">SI</div>
<div class="t" style="left:673.50px;top:514.77px;font-size:9.5px;color:#000;letter-spacing:-0.525px;">NO</div>
<div class="t" style="left:552.33px;top:514.77px;font-size:9.5px;color:#000;">X</div>
<div class="t" style="left:476.80px;top:419.77px;font-size:9.5px;color:#000;letter-spacing:-0.057px;">Fecha:</div>
<div class="t" style="left:476.80px;top:438.77px;font-size:9.5px;color:#000;letter-spacing:-0.057px;">Fecha:</div>
<div class="t" style="left:476.80px;top:457.77px;font-size:9.5px;color:#000;letter-spacing:-0.057px;">Fecha:</div>
<div class="t" style="left:476.80px;top:476.77px;font-size:9.5px;color:#000;letter-spacing:-0.057px;">Fecha:</div>
<div class="t" style="left:556.70px;top:419.77px;font-size:9.5px;color:#000;letter-spacing:0.715px;">1/6/2015</div>
<div class="t" style="left:100.60px;top:593.77px;font-size:9.5px;color:#000;letter-spacing:-0.482px;">PLANES</div>
<div class="t" style="left:178.60px;top:583.77px;font-size:9.5px;color:#000;letter-spacing:0.160px;">Programas</div>
<div class="t" style="left:270.20px;top:583.77px;font-size:9.5px;color:#000;letter-spacing:0.418px;">Proyectos</div>
<div class="t" style="left:343.60px;top:583.77px;font-size:9.5px;color:#000;letter-spacing:0.461px;">Meta del Proyecto</div>
<div class="t" style="left:550.30px;top:573.77px;font-size:9.5px;color:#000;letter-spacing:-0.241px;">ESTADO DE PROGRAMACIÓN</div>
<div class="t" style="left:586.70px;top:596.77px;font-size:9.5px;color:#000;letter-spacing:0.375px;">En ejecución</div>
<div class="t" style="left:815.00px;top:593.77px;font-size:9.5px;color:#000;letter-spacing:0.303px;">Observaciones</div>
<div class="a" style="left:434px;top:613px;width:74px;height:18px;overflow:hidden"><div class="a" style="left:-434px;top:-613px;width:0;height:0">
<div class="t" style="left:452.50px;top:610.77px;font-size:9.5px;color:#000;letter-spacing:0.620px;">Valor ($)</div>
<div class="t" style="left:449.70px;top:623.77px;font-size:9.5px;color:#000;letter-spacing:0.492px;">codificado</div>
</div></div>
<div class="t" style="left:510.40px;top:617.77px;font-size:9.5px;color:#000;letter-spacing:0.460px;">Valor ($) ejecutado</div>
<div class="a" style="left:603px;top:613px;width:86px;height:18px;overflow:hidden"><div class="a" style="left:-603px;top:-613px;width:0;height:0">
<div class="t" style="left:623.40px;top:609.77px;font-size:9.5px;color:#000;letter-spacing:0.303px;">% Avance</div>
<div class="t" style="left:610.30px;top:623.77px;font-size:9.5px;color:#000;letter-spacing:0.304px;">presupuestario</div>
</div></div>
<div class="t" style="left:706.70px;top:617.77px;font-size:9.5px;color:#000;letter-spacing:0.130px;">% Avance Físico</div>
<div class="a" style="left:157px;top:632px;width:90px;height:18px;overflow:hidden"><div class="a" style="left:-157px;top:-632px;width:0;height:0">
<div class="t" style="left:159.20px;top:629.77px;font-size:9.5px;color:#000;letter-spacing:0.439px;">Proteccion de</div>
<div class="t" style="left:159.20px;top:644.77px;font-size:9.5px;color:#000;letter-spacing:0.301px;">áreas naturales</div>
</div></div>
<div class="a" style="left:248px;top:632px;width:90px;height:18px;overflow:hidden"><div class="a" style="left:-248px;top:-632px;width:0;height:0">
<div class="t" style="left:261.90px;top:629.77px;font-size:9.5px;color:#000;letter-spacing:-0.707px;">PROYECTO DE</div>
<div class="t" style="left:258.50px;top:644.77px;font-size:9.5px;color:#000;letter-spacing:-0.860px;">PROTECCIÓN DE</div>
</div></div>
<div class="a" style="left:339px;top:632px;width:94px;height:18px;overflow:hidden"><div class="a" style="left:-339px;top:-632px;width:0;height:0">
<div class="t" style="left:341.50px;top:629.77px;font-size:9.5px;color:#000;letter-spacing:0.511px;">Meta del Proyecto:</div>
<div class="t" style="left:341.50px;top:644.77px;font-size:9.5px;color:#000;letter-spacing:0.595px;">Desarrollar</div>
</div></div>
<div class="t" style="left:437.40px;top:636.77px;font-size:9.5px;color:#000;">$</div>
<div class="t" style="left:456.70px;top:636.77px;font-size:9.5px;color:#000;letter-spacing:0.482px;">10,000.00</div>
<div class="t" style="left:513.00px;top:636.77px;font-size:9.5px;color:#000;">$</div>
<div class="t" style="left:556.30px;top:636.77px;font-size:9.5px;color:#000;letter-spacing:0.590px;">6,320.00</div>
<div class="t" style="left:668.50px;top:636.77px;font-size:9.5px;color:#000;letter-spacing:-0.771px;">63%</div>
<div class="t" style="left:735.00px;top:636.77px;font-size:9.5px;color:#000;letter-spacing:-0.471px;">75%</div>
<div class="a" style="left:798px;top:632px;width:100px;height:18px;overflow:hidden"><div class="a" style="left:-798px;top:-632px;width:0;height:0">
<div class="t" style="left:800.80px;top:629.77px;font-size:9.5px;color:#000;letter-spacing:0.399px;">No se logro ejecutar</div>
<div class="t" style="left:800.80px;top:643.77px;font-size:9.5px;color:#000;letter-spacing:0.441px;">la meta, por las</div>
</div></div>
</div>
<div class="a" style="left:1338px;top:237px;width:22px;height:441px;background:#e6e6e6"></div>
<div class="a" style="left:1342px;top:239px;width:15px;height:439px;background:#f0f0f0"></div>
<div class="a" style="left:1342px;top:239px;width:15px;height:15px;background:#fff;border:1px solid #a6a6a6"></div>
<svg class="a" style="left:1345px;top:243px;" width="9" height="6" viewBox="0 0 9 6"><path d="M0 5 H8 L4 0.5 Z" fill="#333"/></svg>
<div class="a" style="left:1342px;top:254px;width:15px;height:17px;background:#fff;border:1px solid #a6a6a6"></div>
<div class="a" style="left:1342px;top:664px;width:15px;height:15px;background:#fff;border:1px solid #a6a6a6"></div>
<svg class="a" style="left:1346px;top:668px;" width="9" height="6" viewBox="0 0 9 6"><path d="M0 0.5 H8 L4 5 Z" fill="#333"/></svg>
<div class="a" style="left:1338px;top:256px;width:1px;height:422px;background:#a6a6a6"></div>
<div class="a" style="left:0px;top:677px;width:1339px;height:1px;background:#a6a6a6"></div>
<svg class="a" style="left:24px;top:687px;" width="6" height="9" viewBox="0 0 6 9"><path d="M5 0.5 V8.5 L0.5 4.5 Z" fill="#bdbdbd"/></svg>
<svg class="a" style="left:55px;top:687px;" width="6" height="9" viewBox="0 0 6 9"><path d="M0.5 0.5 V8.5 L5 4.5 Z" fill="#bdbdbd"/></svg>
<div class="a" style="left:100px;top:678px;width:173px;height:25px;background:#fff"></div>
<div class="a" style="left:100px;top:701px;width:173px;height:2px;background:#217346"></div>
<div class="a" style="left:100px;top:678px;width:1px;height:25px;background:#c6c6c6"></div>
<div class="a" style="left:273px;top:678px;width:1px;height:25px;background:#c6c6c6"></div>
<div class="t" style="left:112.60px;top:685.77px;font-size:12.5px;color:#217346;letter-spacing:0.144px;font-weight:bold;">Desarrollo local PDOT C</div>
<div class="t" style="left:287.40px;top:685.77px;font-size:12.5px;color:#444;letter-spacing:-0.076px;">Metas PDOT C</div>
<div class="a" style="left:385px;top:684px;width:1px;height:17px;background:#bdbdbd"></div>
<svg class="a" style="left:418px;top:683px;" width="18" height="18" viewBox="0 0 18 18"><circle cx="8.5" cy="9" r="7.2" fill="none" stroke="#777" stroke-width="1.3"/><path d="M8.5 5 V13 M4.5 9 H12.5" stroke="#777" stroke-width="1.4"/></svg>
<div class="a" style="left:816px;top:685px;width:2px;height:2px;background:#a6a6a6"></div>
<div class="a" style="left:816px;top:689px;width:2px;height:2px;background:#a6a6a6"></div>
<div class="a" style="left:816px;top:693px;width:2px;height:2px;background:#a6a6a6"></div>
<div class="a" style="left:834px;top:685px;width:504px;height:15px;background:#f0f0f0"></div>
<div class="a" style="left:834px;top:685px;width:14px;height:15px;background:#fff;border:1px solid #a6a6a6"></div>
<svg class="a" style="left:838px;top:689px;" width="6" height="8" viewBox="0 0 6 8"><path d="M5 0 V8 L0.5 4 Z" fill="#333"/></svg>
<div class="a" style="left:847px;top:685px;width:312px;height:15px;background:#fff;border:1px solid #a6a6a6"></div>
<div class="a" style="left:1324px;top:685px;width:15px;height:15px;background:#fff;border:1px solid #a6a6a6"></div>
<svg class="a" style="left:1329px;top:689px;" width="6" height="8" viewBox="0 0 6 8"><path d="M0.5 0 V8 L5 4 Z" fill="#333"/></svg>
<div class="a" style="left:0px;top:705px;width:1360px;height:1px;background:#c8c8c8"></div>
<div class="t" style="left:7.40px;top:711.02px;font-size:12px;color:#333;letter-spacing:-0.590px;">Listo</div>
<svg class="a" style="left:49px;top:709px;" width="18" height="17" viewBox="0 0 18 17"><path d="M5.5 2.2 A6 6 0 1 0 6.5 13.8" fill="none" stroke="#555" stroke-width="1.3" stroke-dasharray="2.5 1.2"/><path d="M6 0 V6 L8.5 8.5" fill="none" stroke="#444" stroke-width="1.2"/><path d="M9 5.5 H13 M11.5 4 L13 5.5 L11.5 7" fill="none" stroke="#444" stroke-width="1.1"/><path d="M8.5 9.5 L15 16 M15 9.5 L8.5 16" stroke="#333" stroke-width="1.6"/></svg>
<div class="t" style="left:69.30px;top:711.02px;font-size:12px;color:#333;letter-spacing:-0.291px;">Accesibilidad: es necesario investigar</div>
<div class="a" style="left:1060px;top:706px;width:40px;height:22px;background:#d4d4d4"></div>
<svg class="a" style="left:1072px;top:710px;" width="15" height="15" viewBox="0 0 15 15"><rect x="0.5" y="0.5" width="14" height="14" fill="none" stroke="#666"/><path d="M5.5 0.5 V14.5 M9.5 0.5 V14.5 M0.5 5.5 H14.5 M0.5 9.5 H14.5" stroke="#666"/></svg>
<svg class="a" style="left:1113px;top:710px;" width="15" height="15" viewBox="0 0 15 15"><rect x="0.5" y="0.5" width="14" height="14" fill="none" stroke="#666"/><rect x="3.5" y="3.5" width="8" height="8" fill="none" stroke="#666"/><path d="M5 5.5 H10 M5 7.5 H10 M5 9.5 H10" stroke="#666"/></svg>
<svg class="a" style="left:1153px;top:710px;" width="15" height="15" viewBox="0 0 15 15"><path d="M0.5 0.5 H14.5 V14.5 H0.5 Z" fill="none" stroke="#666"/><path d="M5.5 0.5 V7.5 H10.5 V0.5" fill="none" stroke="#666"/></svg>
<div class="a" style="left:1186px;top:716px;width:7px;height:1px;background:#444"></div>
<div class="a" style="left:1199px;top:716px;width:99px;height:1px;background:#777"></div>
<div class="a" style="left:1247px;top:711px;width:5px;height:12px;background:#555"></div>
<div class="a" style="left:1303px;top:716px;width:9px;height:1px;background:#444"></div>
<div class="a" style="left:1307px;top:712px;width:1px;height:9px;background:#444"></div>
<div class="t" style="left:1325.00px;top:711.02px;font-size:12px;color:#333;letter-spacing:-0.973px;">100%</div>
<svg class="a" style="left:15px;top:740px;" width="18" height="17" viewBox="0 0 18 17"><path d="M0 2.3 L7.3 1.3 V8 H0 Z M8.3 1.1 L17 0 V8 H8.3 Z M0 9 H7.3 V15.7 L0 14.7 Z M8.3 9 H17 V17 L8.3 15.9 Z" fill="#fff"/></svg>
<svg class="a" style="left:63px;top:740px;" width="19" height="18" viewBox="0 0 19 18"><circle cx="11.5" cy="7" r="5.7" fill="none" stroke="#fff" stroke-width="1.4"/><path d="M7.5 11 L1 17.3" stroke="#fff" stroke-width="1.6"/></svg>
<svg class="a" style="left:110px;top:735px;" width="26" height="26" viewBox="0 0 26 26"><defs><linearGradient id="eg" x1="0" y1="0" x2="1" y2="1"><stop offset="0" stop-color="#35c1f1"/><stop offset="0.6" stop-color="#1b8ad6"/><stop offset="1" stop-color="#2a5fc4"/></linearGradient><linearGradient id="eg2" x1="0" y1="0" x2="1" y2="0"><stop offset="0" stop-color="#6ad34a"/><stop offset="1" stop-color="#1f9ad8"/></linearGradient></defs><circle cx="13" cy="13" r="12" fill="url(#eg)"/><path d="M6 15 Q8 8 15 9 Q21 10 21 15 H10 Q11 20 16 20 Q20 20 23 18 Q21 24 14 25 Q6 24 6 15 Z" fill="#0c59a4"/><path d="M8 14.5 Q9 10.5 14 10.5 Q18 10.5 18.5 14.5 Z" fill="#fff" opacity="0.0"/><path d="M3 10 Q6 4 13 4 Q22 4 24 12 Q22 8 15 8 Q8 8 6 15 Z" fill="url(#eg2)"/></svg>
<svg class="a" style="left:160px;top:736px;" width="25" height="25" viewBox="0 0 25 25"><circle cx="12.5" cy="12.5" r="12" fill="#db4437"/><path d="M12.5 12.5 L2.1 6.5 A12 12 0 0 0 12.5 24.5 Z" fill="#0f9d58"/><path d="M12.5 12.5 L12.5 24.5 A12 12 0 0 0 22.9 6.5 Z" fill="#ffcd40"/><path d="M2.1 6.5 A12 12 0 0 1 22.9 6.5 L12.5 6.5 Z" fill="#db4437"/><circle cx="12.5" cy="12.5" r="5.6" fill="#fff"/><circle cx="12.5" cy="12.5" r="4.4" fill="#4285f4"/></svg>
<svg class="a" style="left:207px;top:736px;" width="27" height="24" viewBox="0 0 27 24"><rect x="6" y="1" width="20" height="22" rx="2" fill="#2b7cd3"/><rect x="6" y="1" width="20" height="6" fill="#41a5ee"/><rect x="6" y="7" width="20" height="6" fill="#2b7cd3"/><rect x="6" y="13" width="20" height="10" fill="#185abd"/><rect x="0" y="5" width="14" height="14" rx="1.5" fill="#185abd"/><text x="1.5" y="16" font-family="Liberation Sans" font-weight="bold" font-size="11" fill="#fff">W</text></svg>
<svg class="a" style="left:258px;top:738px;" width="24" height="20" viewBox="0 0 24 20"><path d="M1 2 H9 L11 4 H23 V18 H1 Z" fill="#e8a83a"/><rect x="1" y="6" width="22" height="12" fill="#ffd35b"/><rect x="8" y="12" width="9" height="6" fill="#2d8bd6"/></svg>
<svg class="a" style="left:306px;top:736px;" width="27" height="24" viewBox="0 0 27 24"><rect x="6" y="1" width="20" height="22" rx="2" fill="#21a366"/><rect x="16" y="1" width="10" height="11" fill="#33c481"/><rect x="6" y="12" width="20" height="11" fill="#107c41"/><rect x="0" y="5" width="14" height="14" rx="1.5" fill="#107c41"/><text x="3" y="16" font-family="Liberation Sans" font-weight="bold" font-size="11" fill="#fff">X</text></svg>
<svg class="a" style="left:355px;top:735px;" width="26" height="26" viewBox="0 0 26 26"><defs><linearGradient id="ff" x1="0.8" y1="0" x2="0.2" y2="1"><stop offset="0" stop-color="#ffcf2e"/><stop offset="0.45" stop-color="#ff7139"/><stop offset="1" stop-color="#e8315b"/></linearGradient></defs><path d="M4 9 Q6 3 12 2 Q10 5 13 6 Q16 3 19 2 Q18 5 20 7 Q25 12 23 18 Q20 25 13 25 Q4 25 2.5 16 Q2 12 4 9 Z" fill="url(#ff)"/><circle cx="13.5" cy="15" r="5.8" fill="#7542e5"/><path d="M9 13 Q12 10 16 12 Q18 14 17 17 Q14 20 11 18" fill="#ff8a3d" opacity="0.9"/></svg>
<svg class="a" style="left:404px;top:735px;" width="25" height="25" viewBox="0 0 25 25"><circle cx="12.5" cy="12.5" r="12" fill="#1ed760"/><path d="M6 9 Q13 6.5 19.5 10 M6.8 12.5 Q13 10.5 18.5 13.3 M7.5 15.8 Q12.5 14.3 17.3 16.5" fill="none" stroke="#111" stroke-width="1.8" stroke-linecap="round"/></svg>
<svg class="a" style="left:454px;top:736px;" width="25" height="25" viewBox="0 0 25 25"><circle cx="12.5" cy="12.5" r="12" fill="#db4437"/><path d="M12.5 12.5 L2.1 6.5 A12 12 0 0 0 12.5 24.5 Z" fill="#0f9d58"/><path d="M12.5 12.5 L12.5 24.5 A12 12 0 0 0 22.9 6.5 Z" fill="#ffcd40"/><path d="M2.1 6.5 A12 12 0 0 1 22.9 6.5 L12.5 6.5 Z" fill="#db4437"/><circle cx="12.5" cy="12.5" r="5.6" fill="#fff"/><circle cx="12.5" cy="12.5" r="4.4" fill="#4285f4"/></svg>
<svg class="a" style="left:466px;top:747px;" width="15" height="14" viewBox="0 0 15 14"><circle cx="7.5" cy="7" r="6.5" fill="#666"/><circle cx="5" cy="6" r="2" fill="#ddd"/><circle cx="10" cy="6" r="2" fill="#ddd"/><path d="M4 10 H11" stroke="#ddd" stroke-width="1.5"/></svg>
<div class="a" style="left:250px;top:765px;width:40px;height:3px;background:#76b9ed"></div>
<div class="a" style="left:298px;top:765px;width:40px;height:3px;background:#76b9ed"></div>
<div class="a" style="left:397px;top:765px;width:40px;height:3px;background:#76b9ed"></div>
<div class="a" style="left:446px;top:765px;width:40px;height:3px;background:#76b9ed"></div>
<svg class="a" style="left:1116px;top:743px;" width="14" height="9" viewBox="0 0 14 9"><path d="M1 8 L7 1.5 L13 8" fill="none" stroke="#fff" stroke-width="1.3"/></svg>
<svg class="a" style="left:1141px;top:740px;" width="13" height="16" viewBox="0 0 13 16"><rect x="1" y="4" width="7" height="8" rx="2" fill="none" stroke="#fff" stroke-width="1.2"/><path d="M8 7 L12 5 V11 L8 9" fill="none" stroke="#fff" stroke-width="1.1"/><path d="M2 1 Q6 -0.5 10 1 M2 15 Q6 16.5 10 15" fill="none" stroke="#fff"/></svg>
<svg class="a" style="left:1163px;top:741px;" width="17" height="15" viewBox="0 0 17 15"><rect x="0.5" y="1.5" width="3" height="3" fill="none" stroke="#fff"/><rect x="3.5" y="0.5" width="13" height="10" fill="none" stroke="#fff"/><path d="M10 10.5 V13.5 M6 14 H14 M2 4.5 V13 M2 8 H3.5" stroke="#fff"/></svg>
<svg class="a" style="left:1187px;top:740px;" width="17" height="16" viewBox="0 0 17 16"><path d="M1 5.5 H4 L8.5 1.5 V14.5 L4 10.5 H1 Z" fill="none" stroke="#fff" stroke-width="1.1"/><path d="M11 5 Q12.5 8 11 11 M13 3.5 Q15.5 8 13 12.5 M15 2 Q18.5 8 15 14" fill="none" stroke="#fff" stroke-width="1"/></svg>
<div class="t" style="left:1215.30px;top:741.27px;font-size:11.5px;color:#fff;letter-spacing:-1.604px;">ESP</div>
<div class="t" style="left:1261.00px;top:733.27px;font-size:11.5px;color:#fff;letter-spacing:-0.296px;">08:19</div>
<div class="t" style="left:1249.70px;top:751.27px;font-size:11.5px;color:#fff;letter-spacing:-0.007px;">14/4/2023</div>
<svg class="a" style="left:1318px;top:740px;" width="24" height="24" viewBox="0 0 24 24"><path d="M1.5 0.5 H16.5 V11.5 H6 L1.5 15.5 Z" fill="#fff"/><path d="M4 3.5 H14 M4 6 H14 M4 8.5 H10" stroke="#111" stroke-width="1"/><circle cx="16" cy="15" r="7.3" fill="#333" stroke="#111" stroke-width="1"/><text x="13" y="19" font-family="Liberation Sans" font-size="10" fill="#fff">1</text></svg>
<div class="a" style="left:1355px;top:728px;width:1px;height:40px;background:#555"></div>
</div></body></html>
